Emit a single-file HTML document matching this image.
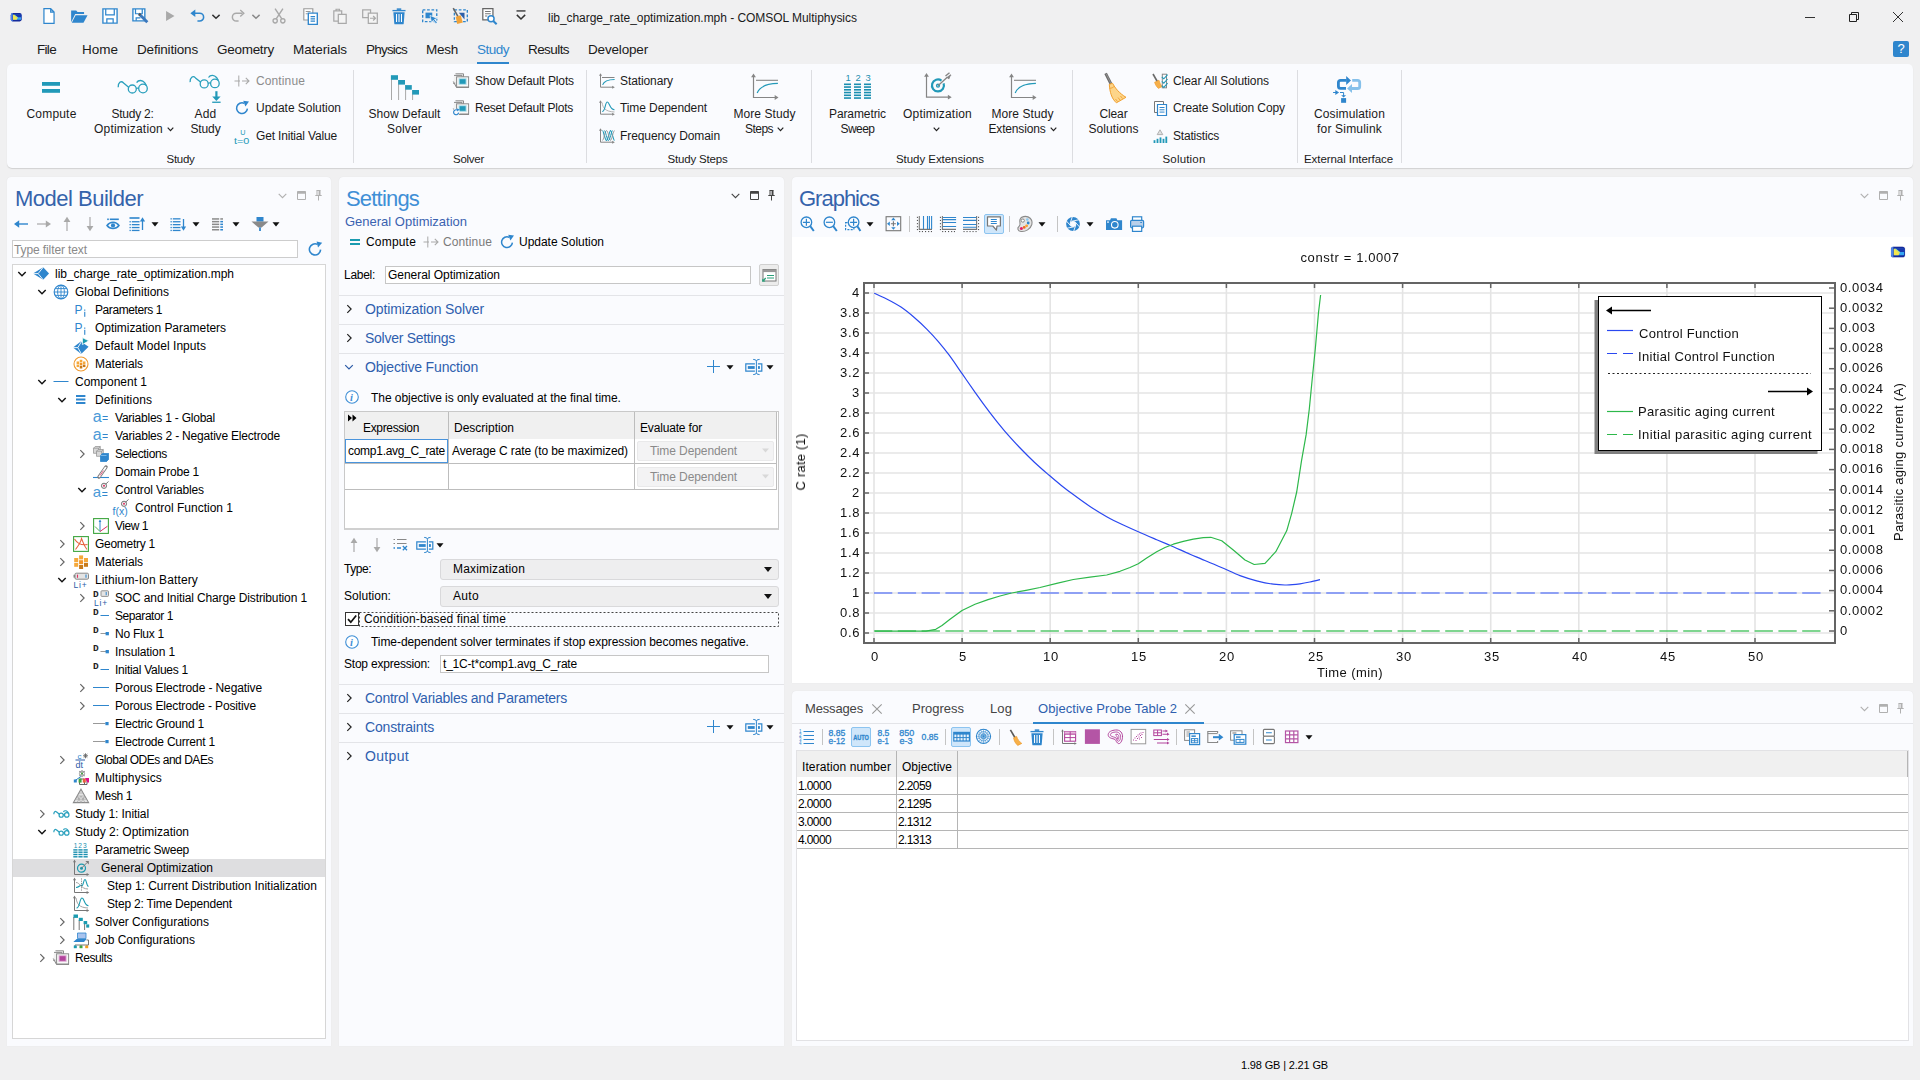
<!DOCTYPE html>
<html><head><meta charset="utf-8"><title>COMSOL Multiphysics</title>
<style>
html,body{margin:0;padding:0;}
body{width:1920px;height:1080px;overflow:hidden;background:#f0f0f1;position:relative;font-family:"Liberation Sans",sans-serif;}
.t{position:absolute;white-space:nowrap;font-family:"Liberation Sans",sans-serif;}
.r{position:absolute;box-sizing:border-box;}
.p{position:absolute;box-sizing:border-box;background:#fafbfe;border-radius:4px 4px 0 0;box-shadow:0 0 1px rgba(0,0,0,0.10);}
svg{overflow:visible;}
</style></head><body>

<svg class="r" style="left:9.8px;top:11px;" width="12.5" height="12.5" viewBox="0 0 16 16"><rect x="0.2" y="1.9" width="15.6" height="12.2" fill="#ececf0" rx="3.5" opacity="0.8"/><rect x="1" y="2.7" width="14" height="10.6" fill="#142a9c" rx="2.6" /><path d="M3.4 2.7H2.8Q1 3 1 5.3V10.7Q1 13 2.8 13.3H3.4Z" fill="#4f86e8" /><rect x="3.8" y="4.7" width="10.4" height="6.6" fill="#35a6f2" rx="0.8" /><path d="M3.8 4.7H5.5L10 8.2L8.6 11.3H3.8Z" fill="#f6e64c" /><path d="M6.2 4.7H14.2V8H10.2Z" fill="#1a37ad" /><path d="M5.5 4.7L10 8.2L9.4 9.6L4.6 5Z" fill="#a8e08a" opacity="0.7"/></svg>
<svg class="r" style="left:40px;top:7.4px;" width="18" height="18" viewBox="0 0 16 16"><path d="M3.5 1.5H9.5L12.5 4.5V14.5H3.5Z M9.5 1.5V4.5H12.5" stroke="#2f86cd" stroke-width="1.1" fill="#fff" /></svg>
<svg class="r" style="left:70px;top:7.4px;" width="18" height="18" viewBox="0 0 16 16"><path d="M1 3h4.5l1.2 1.5H12.5V6.3H4.6L1 13.5Z" fill="#2f86cd" /><path d="M5 7.3H15.6L12 14H1.6Z" fill="#2f86cd" /></svg>
<svg class="r" style="left:101px;top:7.4px;" width="18" height="18" viewBox="0 0 16 16"><path d="M1.7 1.7H14.3V14.3H1.7Z" stroke="#2f86cd" stroke-width="1.2" fill="#fff" /><path d="M4.2 1.8V7H11.8V1.8" stroke="#2f86cd" stroke-width="1.1" fill="none" /><path d="M5.2 14.2V10.6H10.8V14.2" stroke="#2f86cd" stroke-width="1.1" fill="none" /></svg>
<svg class="r" style="left:131px;top:7.4px;" width="18" height="18" viewBox="0 0 16 16"><path d="M1.7 1.7H12.3V12.3H1.7Z" stroke="#2f86cd" stroke-width="1.2" fill="#fff" /><path d="M4 1.8V6H10V1.8" stroke="#2f86cd" stroke-width="1.1" fill="none" /><path d="M4.6 12.2V9.6H8.4" stroke="#2f86cd" stroke-width="1.1" fill="none" /><path d="M7.5 6.5L14.5 13.5" stroke="#3a78bd" stroke-width="2.6" fill="none" /><path d="M7 6L8.3 7.3" stroke="#555555" stroke-width="2.2" fill="none" /></svg>
<svg class="r" style="left:161px;top:7.4px;" width="18" height="18" viewBox="0 0 16 16"><path d="M4.5 3.5L12 8L4.5 12.5Z" fill="#a9a9a9" /></svg>
<svg class="r" style="left:189px;top:7.4px;" width="18" height="18" viewBox="0 0 16 16"><path d="M4 5.5H9.5A3.5 3.5 0 0 1 9.5 12.5H7.5" stroke="#2f86cd" stroke-width="1.4" fill="none" /><path d="M1.2 5.5L5.6 2.2V8.8Z" fill="#2f86cd" /></svg>
<svg class="r" style="left:207px;top:7.4px;" width="18" height="18" viewBox="0 0 16 16"><path d="M4.8 7L8 10L11.2 7" stroke="#333" stroke-width="1.3" fill="none" /></svg>
<svg class="r" style="left:229px;top:7.4px;" width="18" height="18" viewBox="0 0 16 16"><path d="M12 5.5H6.5A3.5 3.5 0 0 0 6.5 12.5H8.5" stroke="#a9a9a9" stroke-width="1.3" fill="none" /><path d="M10 2.6L13.2 5.5L10 8.4" stroke="#a9a9a9" stroke-width="1.2" fill="none" /></svg>
<svg class="r" style="left:247px;top:7.4px;" width="18" height="18" viewBox="0 0 16 16"><path d="M4.8 7L8 10L11.2 7" stroke="#8a8a8a" stroke-width="1.3" fill="none" /></svg>
<svg class="r" style="left:270px;top:7.4px;" width="18" height="18" viewBox="0 0 16 16"><path d="M4.5 1.5L10.5 10.5M11.5 1.5L5.5 10.5" stroke="#a9a9a9" stroke-width="1.3" fill="none" /><circle cx="4.6" cy="12.3" r="1.9" fill="none" stroke="#a9a9a9" stroke-width="1.2"/><circle cx="11.4" cy="12.3" r="1.9" fill="none" stroke="#a9a9a9" stroke-width="1.2"/></svg>
<svg class="r" style="left:301px;top:7.4px;" width="18" height="18" viewBox="0 0 16 16"><path d="M2.5 1.5H10.5V11.5H2.5Z" stroke="#999" stroke-width="1" fill="#fff" /><path d="M4.2 4H8.5M4.2 6H6" stroke="#999" stroke-width="0.9" fill="none" /><path d="M6.5 5.5H14.5V15.5H6.5Z" stroke="#2f86cd" stroke-width="1.2" fill="#fff" /><path d="M8.5 8.5H12.5M8.5 10.5H12.5M8.5 12.5H12.5" stroke="#2f86cd" stroke-width="1" fill="none" /></svg>
<svg class="r" style="left:331px;top:7.4px;" width="18" height="18" viewBox="0 0 16 16"><path d="M2.5 3.5H9.5V12.5H2.5Z M4.5 3.5V2H7.5V3.5" stroke="#a9a9a9" stroke-width="1.1" fill="none" /><path d="M6.5 6.5H13.5V14.5H6.5Z" stroke="#a9a9a9" stroke-width="1.1" fill="#f4f4f4" /></svg>
<svg class="r" style="left:361px;top:7.4px;" width="18" height="18" viewBox="0 0 16 16"><path d="M1.5 2.5H8.5V9.5H1.5Z" stroke="#a9a9a9" stroke-width="1.1" fill="none" /><path d="M6.5 5.5H14.5V14.5H6.5Z" stroke="#a9a9a9" stroke-width="1.1" fill="#f4f4f4" /><path d="M8 10H12.5M10.8 8L12.8 10L10.8 12" stroke="#a9a9a9" stroke-width="1.1" fill="none" /></svg>
<svg class="r" style="left:390px;top:7.4px;" width="18" height="18" viewBox="0 0 16 16"><path d="M3 4.6H13L12.2 14.6Q12.1 15.4 11.3 15.4H4.7Q3.9 15.4 3.8 14.6Z" fill="#2f86cd" /><path d="M2.2 2.6H13.8V3.8H2.2Z" fill="#2f86cd" /><path d="M6 1.2H10V2.6H6Z" fill="#2f86cd" /><path d="M5.8 6.2V13.4M8 6.2V13.4M10.2 6.2V13.4" stroke="#fff" stroke-width="0.9" fill="none" /></svg>
<svg class="r" style="left:421px;top:7.4px;" width="18" height="18" viewBox="0 0 16 16"><rect x="1.5" y="2.5" width="12.5" height="10.5" fill="none" stroke="#2f86cd" stroke-width="1.2" stroke-dasharray="2.4 1.5"/><rect x="4" y="5" width="6" height="5" fill="#2f86cd" /><path d="M8 7.5L14.8 10.2L12 11L14.5 14L13.3 14.9L10.9 11.9L9.3 13.9Z" fill="#2f86cd" stroke="#fff" stroke-width="0.6"/></svg>
<svg class="r" style="left:451px;top:7.4px;" width="18" height="18" viewBox="0 0 16 16"><rect x="3" y="2.5" width="11.5" height="10.5" fill="none" stroke="#2f86cd" stroke-width="1.2" stroke-dasharray="2.4 1.5"/><path d="M7 5H12V11Z" fill="#2c5fa8" /><path d="M2 1L6.5 9" stroke="#666" stroke-width="1.4" fill="none" /><path d="M4.2 8.6L8.6 7.4L10.5 13.8L5.5 15Z" fill="#f0a238" /></svg>
<svg class="r" style="left:480px;top:7.4px;" width="18" height="18" viewBox="0 0 16 16"><path d="M2.5 1.5H11.5V11.5H2.5Z" stroke="#666" stroke-width="1.1" fill="#fff" /><path d="M4.5 4H9.5M4.5 6H9.5M4.5 8H6.5" stroke="#777" stroke-width="0.9" fill="none" /><circle cx="9.8" cy="10.4" r="2.7" fill="#fff" stroke="#2f86cd" stroke-width="1.3"/><path d="M11.8 12.4L14.8 15.4" stroke="#2f86cd" stroke-width="1.8" fill="none" /></svg>
<svg class="r" style="left:512px;top:7.4px;" width="18" height="18" viewBox="0 0 16 16"><path d="M4 3.5H12" stroke="#333" stroke-width="1.2" fill="none" /><path d="M4.3 7L8 10.7L11.7 7" stroke="#333" stroke-width="1.3" fill="none" /></svg>
<div class="t" style="left:548px;top:10.0px;font-size:12px;line-height:16px;color:#1a1a1a;letter-spacing:-0.039px;">lib_charge_rate_optimization.mph - COMSOL Multiphysics</div>
<svg class="r" style="left:1804px;top:11px;" width="12" height="12" viewBox="0 0 12 12"><path d="M1 6.5H11" stroke="#333" stroke-width="1" fill="none"/></svg>
<svg class="r" style="left:1848px;top:11px;" width="12" height="12" viewBox="0 0 12 12"><path d="M1.5 3.5H8.5V10.5H1.5Z M3.5 3.5V1.5H10.5V8.5H8.5" stroke="#222" stroke-width="1" fill="none"/></svg>
<svg class="r" style="left:1892px;top:11px;" width="12" height="12" viewBox="0 0 12 12"><path d="M1 1L11 11M11 1L1 11" stroke="#333" stroke-width="1" fill="none"/></svg>
<div class="r" style="left:1893px;top:41px;width:16px;height:16px;background:#2f86cd;border-radius:2px;"></div>
<div class="t" style="left:1901px;top:41.0px;font-size:13px;line-height:16px;color:#fff;transform:translateX(-50%);">?</div>
<div class="t" style="left:37px;top:42.0px;font-size:13.5px;line-height:16px;color:#1a1a1a;letter-spacing:-0.688px;">File</div>
<div class="t" style="left:82px;top:42.0px;font-size:13.5px;line-height:16px;color:#1a1a1a;letter-spacing:-0.003px;">Home</div>
<div class="t" style="left:137px;top:42.0px;font-size:13.5px;line-height:16px;color:#1a1a1a;letter-spacing:-0.185px;">Definitions</div>
<div class="t" style="left:217px;top:42.0px;font-size:13.5px;line-height:16px;color:#1a1a1a;letter-spacing:-0.283px;">Geometry</div>
<div class="t" style="left:293px;top:42.0px;font-size:13.5px;line-height:16px;color:#1a1a1a;letter-spacing:-0.085px;">Materials</div>
<div class="t" style="left:366px;top:42.0px;font-size:13.5px;line-height:16px;color:#1a1a1a;letter-spacing:-0.787px;">Physics</div>
<div class="t" style="left:426px;top:42.0px;font-size:13.5px;line-height:16px;color:#1a1a1a;letter-spacing:-0.253px;">Mesh</div>
<div class="t" style="left:477px;top:42.0px;font-size:13.5px;line-height:16px;color:#2f86cd;letter-spacing:-0.504px;">Study</div>
<div class="t" style="left:528px;top:42.0px;font-size:13.5px;line-height:16px;color:#1a1a1a;letter-spacing:-0.574px;">Results</div>
<div class="t" style="left:588px;top:42.0px;font-size:13.5px;line-height:16px;color:#1a1a1a;letter-spacing:-0.171px;">Developer</div>
<div class="r" style="left:477px;top:62px;width:32px;height:2px;background:#2f86cd;"></div>
<div class="p" style="left:7px;top:64px;width:1906px;height:104px;border-radius:5px;box-shadow:0 1px 1px rgba(0,0,0,0.13);"></div>
<div class="r" style="left:353px;top:70px;width:1px;height:93px;background:#dcdde1;"></div>
<div class="r" style="left:586px;top:70px;width:1px;height:93px;background:#dcdde1;"></div>
<div class="r" style="left:811px;top:70px;width:1px;height:93px;background:#dcdde1;"></div>
<div class="r" style="left:1072px;top:70px;width:1px;height:93px;background:#dcdde1;"></div>
<div class="r" style="left:1297px;top:70px;width:1px;height:93px;background:#dcdde1;"></div>
<div class="r" style="left:1401px;top:70px;width:1px;height:93px;background:#dcdde1;"></div>
<svg class="r" style="left:35px;top:71px;" width="32" height="32" viewBox="0 0 32 32"><rect x="7" y="11" width="18" height="3.8" fill="#2299b8" /><rect x="7" y="18" width="18" height="3.8" fill="#2299b8" /></svg>
<div class="t" style="left:26.5px;top:106.0px;font-size:12px;line-height:16px;color:#1a1a1a;letter-spacing:0.185px;">Compute</div>
<svg class="r" style="left:116px;top:71px;" width="32" height="32" viewBox="0 0 32 32"><g transform="translate(0,0)"><path d="M2.2 16.2C2 11.5 5 9.3 7.6 12L12.9 16.4" stroke="#2aa0bd" stroke-width="1.3" fill="none" /><circle cx="16.3" cy="18" r="4" fill="none" stroke="#2aa0bd" stroke-width="1.3"/><circle cx="27" cy="17.5" r="4.3" fill="none" stroke="#2aa0bd" stroke-width="1.3"/><path d="M20.2 17.6Q21.5 16.6 22.8 17.4" stroke="#2aa0bd" stroke-width="1.3" fill="none" /><path d="M20.6 11.6C22.5 8.6 26.5 9 28.6 11.6L30.6 14.8" stroke="#2aa0bd" stroke-width="1.3" fill="none" /></g></svg>
<div class="t" style="left:111.5px;top:106.0px;font-size:12px;line-height:16px;color:#1a1a1a;letter-spacing:-0.255px;">Study 2:</div>
<div class="t" style="left:94.0px;top:121.0px;font-size:12px;line-height:16px;color:#1a1a1a;letter-spacing:0.191px;">Optimization</div>
<svg class="r" style="left:167.0px;top:127px;" width="7" height="5" viewBox="0 0 7 5"><path d="M0.7 0.7L3.5 3.6L6.3 0.7" stroke="#222" stroke-width="1.2" fill="none"/></svg>
<svg class="r" style="left:189px;top:71px;" width="32" height="32" viewBox="0 0 32 32"><g transform="translate(-1.1,-5.1)"><path d="M2.2 16.2C2 11.5 5 9.3 7.6 12L12.9 16.4" stroke="#2aa0bd" stroke-width="1.3" fill="none" /><circle cx="16.3" cy="18" r="4" fill="none" stroke="#2aa0bd" stroke-width="1.3"/><circle cx="27" cy="17.5" r="4.3" fill="none" stroke="#2aa0bd" stroke-width="1.3"/><path d="M20.2 17.6Q21.5 16.6 22.8 17.4" stroke="#2aa0bd" stroke-width="1.3" fill="none" /><path d="M20.6 11.6C22.5 8.6 26.5 9 28.6 11.6L30.6 14.8" stroke="#2aa0bd" stroke-width="1.3" fill="none" /></g><path d="M27.4 20.2V27" stroke="#2299b8" stroke-width="2.2" fill="none" /><path d="M23.2 25.6H31.6L27.4 30Z" fill="#2299b8" /><rect x="23.2" y="30.6" width="8.4" height="1.3" fill="#2299b8" /></svg>
<div class="t" style="left:194.5px;top:106.0px;font-size:12px;line-height:16px;color:#1a1a1a;letter-spacing:0.215px;">Add</div>
<div class="t" style="left:190.5px;top:121.0px;font-size:12px;line-height:16px;color:#1a1a1a;letter-spacing:-0.138px;">Study</div>
<svg class="r" style="left:388px;top:71px;" width="32" height="32" viewBox="0 0 32 32"><path d="M3.5 5V29M10.6 9V29M17.6 14V29M24.6 19V29" stroke="#a8a8a8" stroke-width="1" fill="none" /><rect x="2.9" y="4.2" width="7.1" height="4.6" fill="#2299b8" /><rect x="10.2" y="9" width="6.8" height="4.6" fill="#2299b8" /><rect x="17.2" y="14.1" width="6.6" height="4.6" fill="#2299b8" /><rect x="24.2" y="19" width="6.8" height="4.6" fill="#2299b8" /></svg>
<div class="t" style="left:368.5px;top:106.0px;font-size:12px;line-height:16px;color:#1a1a1a;letter-spacing:0.050px;">Show Default</div>
<div class="t" style="left:387.0px;top:121.0px;font-size:12px;line-height:16px;color:#1a1a1a;letter-spacing:0.163px;">Solver</div>
<svg class="r" style="left:748px;top:71px;" width="32" height="32" viewBox="0 0 32 32"><path d="M5.5 4.4V26.5H28.5" stroke="#858585" stroke-width="1.2" fill="none" /><path d="M5.5 2.4L3.1 6.199999999999999H7.9Z" fill="#858585" /><path d="M30.5 26.5L26.7 24.1V28.9Z" fill="#858585" /><path d="M8 9.3H30" stroke="#858585" stroke-width="1.1" fill="none" /><path d="M9.2 21.9C12 15 19 12.6 29.9 12.4" stroke="#2299b8" stroke-width="1.2" fill="none" /></svg>
<div class="t" style="left:733.5px;top:106.0px;font-size:12px;line-height:16px;color:#1a1a1a;letter-spacing:0.063px;">More Study</div>
<div class="t" style="left:745.0px;top:121.0px;font-size:12px;line-height:16px;color:#1a1a1a;letter-spacing:-0.538px;">Steps</div>
<svg class="r" style="left:777.0px;top:127px;" width="7" height="5" viewBox="0 0 7 5"><path d="M0.7 0.7L3.5 3.6L6.3 0.7" stroke="#222" stroke-width="1.2" fill="none"/></svg>
<svg class="r" style="left:841px;top:71px;" width="32" height="32" viewBox="0 0 32 32"><text x="4.4" y="9.8" font-family="Liberation Sans" font-size="9.4" fill="#1a8fb0" letter-spacing="4.9">123</text><rect x="3" y="12.5" width="7" height="1.6" fill="#1a8fb0" /><rect x="3" y="15.25" width="7" height="1.6" fill="#1a8fb0" /><rect x="3" y="18.0" width="7" height="1.6" fill="#1a8fb0" /><rect x="3" y="20.75" width="7" height="1.6" fill="#1a8fb0" /><rect x="3" y="23.5" width="7" height="1.6" fill="#1a8fb0" /><rect x="3" y="26.25" width="7" height="1.6" fill="#1a8fb0" /><rect x="13" y="12.5" width="7" height="1.6" fill="#1a8fb0" /><rect x="13" y="15.25" width="7" height="1.6" fill="#1a8fb0" /><rect x="13" y="18.0" width="7" height="1.6" fill="#1a8fb0" /><rect x="13" y="20.75" width="7" height="1.6" fill="#1a8fb0" /><rect x="13" y="23.5" width="7" height="1.6" fill="#1a8fb0" /><rect x="13" y="26.25" width="7" height="1.6" fill="#1a8fb0" /><rect x="23" y="12.5" width="7" height="1.6" fill="#1a8fb0" /><rect x="23" y="15.25" width="7" height="1.6" fill="#1a8fb0" /><rect x="23" y="18.0" width="7" height="1.6" fill="#1a8fb0" /><rect x="23" y="20.75" width="7" height="1.6" fill="#1a8fb0" /><rect x="23" y="23.5" width="7" height="1.6" fill="#1a8fb0" /><rect x="23" y="26.25" width="7" height="1.6" fill="#1a8fb0" /></svg>
<div class="t" style="left:829.0px;top:106.0px;font-size:12px;line-height:16px;color:#1a1a1a;letter-spacing:-0.102px;">Parametric</div>
<div class="t" style="left:840.5px;top:121.0px;font-size:12px;line-height:16px;color:#1a1a1a;letter-spacing:-0.540px;">Sweep</div>
<svg class="r" style="left:921px;top:71px;" width="32" height="32" viewBox="0 0 32 32"><path d="M5.5 3.9V26.2H28.7" stroke="#858585" stroke-width="1.2" fill="none" /><path d="M5.5 1.9L3.1 5.699999999999999H7.9Z" fill="#858585" /><path d="M30.7 26.2L26.9 23.8V28.599999999999998Z" fill="#858585" /><path d="M20.5 9.6A6 6 0 1 0 22.6 12.4" stroke="#2299b8" stroke-width="2.2" fill="none" /><circle cx="17" cy="14.7" r="2.1" fill="#2299b8"/><circle cx="17" cy="14.7" r="0.7" fill="#fff"/><path d="M17 14.7L26.5 6" stroke="#858585" stroke-width="1.3" fill="none" /><path d="M24.5 5L28.5 1.8M26 7L30 3.8M27.5 8L29 4.5" stroke="#858585" stroke-width="1.4" fill="none" /></svg>
<div class="t" style="left:903.0px;top:106.0px;font-size:12px;line-height:16px;color:#1a1a1a;letter-spacing:0.191px;">Optimization</div>
<svg class="r" style="left:1006px;top:71px;" width="32" height="32" viewBox="0 0 32 32"><path d="M5.5 4.4V26.5H28.5" stroke="#858585" stroke-width="1.2" fill="none" /><path d="M5.5 2.4L3.1 6.199999999999999H7.9Z" fill="#858585" /><path d="M30.5 26.5L26.7 24.1V28.9Z" fill="#858585" /><path d="M8 9.3H30" stroke="#858585" stroke-width="1.1" fill="none" /><path d="M9.2 21.9C12 15 19 12.6 29.9 12.4" stroke="#2299b8" stroke-width="1.2" fill="none" /></svg>
<div class="t" style="left:991.5px;top:106.0px;font-size:12px;line-height:16px;color:#1a1a1a;letter-spacing:0.063px;">More Study</div>
<div class="t" style="left:988.5px;top:121.0px;font-size:12px;line-height:16px;color:#1a1a1a;letter-spacing:-0.171px;">Extensions</div>
<svg class="r" style="left:1049.5px;top:127px;" width="7" height="5" viewBox="0 0 7 5"><path d="M0.7 0.7L3.5 3.6L6.3 0.7" stroke="#222" stroke-width="1.2" fill="none"/></svg>
<svg class="r" style="left:1097px;top:71px;" width="32" height="32" viewBox="0 0 32 32"><path d="M8.6 2.4L14 13" stroke="#6a6a6a" stroke-width="2.8" fill="none" /><path d="M9 2.6L13.6 12" stroke="#9a9a9a" stroke-width="0.8" fill="none" /><path d="M12.3 13.3L15.6 12.3C18 17 22.5 22.5 29 26.3L19.4 31.8C14.5 27.5 12.8 21 12.3 13.3Z" fill="#fdd58a" stroke="#f0a030" stroke-width="1" stroke-linejoin="round"/><path d="M12.6 17.2C14.5 17.4 16 16.6 17.2 15.2M18.5 28L20.5 30.5M21 26.5L23 29M23.5 25L25.5 27.5" stroke="#f0a030" stroke-width="0.9" fill="none" /></svg>
<div class="t" style="left:1099.5px;top:106.0px;font-size:12px;line-height:16px;color:#1a1a1a;letter-spacing:-0.137px;">Clear</div>
<div class="t" style="left:1088.5px;top:121.0px;font-size:12px;line-height:16px;color:#1a1a1a;letter-spacing:0.069px;">Solutions</div>
<svg class="r" style="left:1332px;top:71px;" width="32" height="32" viewBox="0 0 32 32"><path d="M14 17.3H8.6Q6.4 17.3 6.4 15.2V11.5Q6.4 9.4 8.6 9.4H14.6" stroke="#2f86cd" stroke-width="2.8" fill="none" /><path d="M14.2 4.9L19 9.4L14.2 14.1Z" fill="#2f86cd" /><path d="M20.2 9.4H25.5Q27.7 9.4 27.7 11.5V15.4Q27.7 17.5 25.5 17.5H19.6" stroke="#85c0ea" stroke-width="2.8" fill="none" /><path d="M20 13.1L15.1 17.6L20 21.9Z" fill="#85c0ea" /><path d="M1.1 21.5H4M8 21.5H11.6V25" stroke="#2f86cd" stroke-width="1" fill="none" /><path d="M3.3 19.1L7.1 21.5L3.3 24Z" fill="#2f86cd" /><path d="M9.1 24.2H14.1L11.6 26.6Z" fill="#2f86cd" /><rect x="9.1" y="27.1" width="5" height="4.7" fill="#2f86cd" /></svg>
<div class="t" style="left:1314.0px;top:106.0px;font-size:12px;line-height:16px;color:#1a1a1a;letter-spacing:0.135px;">Cosimulation</div>
<div class="t" style="left:1317.0px;top:121.0px;font-size:12px;line-height:16px;color:#1a1a1a;letter-spacing:0.192px;">for Simulink</div>
<svg class="r" style="left:933px;top:127px;" width="7" height="5" viewBox="0 0 7 5"><path d="M0.7 0.7L3.5 3.6L6.3 0.7" stroke="#222" stroke-width="1.2" fill="none"/></svg>
<svg class="r" style="left:234px;top:73px;" width="16" height="16" viewBox="0 0 16 16"><path d="M0.5 8H6M4.8 2.5V13.5" stroke="#a9a9a9" stroke-width="1" fill="none" /><path d="M8 8H15M11.8 4.8L15 8L11.8 11.2" stroke="#a9a9a9" stroke-width="1.1" fill="none" /></svg>
<div class="t" style="left:256px;top:73.0px;font-size:12px;line-height:16px;color:#8c8c8c;letter-spacing:0.119px;">Continue</div>
<svg class="r" style="left:234px;top:100px;" width="16" height="16" viewBox="0 0 16 16"><path d="M13.4 8.6A5.4 5.4 0 1 1 10.2 3.2" stroke="#2f86cd" stroke-width="1.5" fill="none" /><path d="M9.2 0.8L15 1.4L11.4 6.4Z" fill="#2f86cd" /></svg>
<div class="t" style="left:256px;top:100.0px;font-size:12px;line-height:16px;color:#1a1a1a;letter-spacing:-0.028px;">Update Solution</div>
<svg class="r" style="left:234px;top:128px;" width="16" height="16" viewBox="0 0 16 16"><text x="6.2" y="6.6" font-family="Liberation Sans" font-size="7.2" fill="#2299b8">U</text><text x="0" y="15.6" font-family="Liberation Sans" font-size="9.6" fill="#2299b8" textLength="15.4" lengthAdjust="spacingAndGlyphs">t=0</text></svg>
<div class="t" style="left:256px;top:128.0px;font-size:12px;line-height:16px;color:#1a1a1a;letter-spacing:-0.168px;">Get Initial Value</div>
<svg class="r" style="left:453px;top:73px;" width="16" height="16" viewBox="0 0 16 16"><path d="M2.5 0.8H10.5V8" stroke="#8a8a8a" stroke-width="1" fill="#f2f2f2" /><path d="M1 2.4H9V10.5H0.3" stroke="#8a8a8a" stroke-width="1" fill="#f2f2f2" /><path d="M0.3 8.5L3.5 14.5H16" stroke="#8a8a8a" stroke-width="1" fill="#ddd" /><rect x="3.6" y="3.8" width="12" height="10.2" fill="#f8f8f8" stroke="#8a8a8a" stroke-width="1" /><rect x="5.6" y="5.2" width="8" height="6.6" fill="#a8dbe8" /><rect x="6.6" y="6.2" width="6" height="4.6" fill="#2299b8" /></svg>
<div class="t" style="left:475px;top:73.0px;font-size:12px;line-height:16px;color:#1a1a1a;letter-spacing:-0.134px;">Show Default Plots</div>
<svg class="r" style="left:453px;top:100px;" width="16" height="16" viewBox="0 0 16 16"><path d="M2.5 0.8H10.5V8" stroke="#8a8a8a" stroke-width="1" fill="#f2f2f2" /><path d="M1 2.4H9V10.5H0.3" stroke="#8a8a8a" stroke-width="1" fill="#f2f2f2" /><path d="M0.3 8.5L3.5 14.5H16" stroke="#8a8a8a" stroke-width="1" fill="#ddd" /><rect x="3.6" y="3.8" width="12" height="10.2" fill="#f8f8f8" stroke="#8a8a8a" stroke-width="1" /><rect x="5.6" y="5.2" width="8" height="6.6" fill="#a8dbe8" /><rect x="6.6" y="6.2" width="6" height="4.6" fill="#2299b8" /><circle cx="3.2" cy="12.2" r="3.4" fill="#fafbfe"/><path d="M5.6 12.6A2.5 2.5 0 1 1 4.2 10" stroke="#2f86cd" stroke-width="1.2" fill="none" /><path d="M3.4 8.2L6.6 9.4L4.4 11.6Z" fill="#2f86cd" /></svg>
<div class="t" style="left:475px;top:100.0px;font-size:12px;line-height:16px;color:#1a1a1a;letter-spacing:-0.250px;">Reset Default Plots</div>
<svg class="r" style="left:599px;top:73px;" width="16" height="16" viewBox="0 0 16 16"><path d="M1.5 2V14.2H14" stroke="#858585" stroke-width="1" fill="none" /><path d="M1.5 0.2L0 2.8H3Z" fill="#858585" /><path d="M15.8 14.2L13.2 12.7V15.7Z" fill="#858585" /><path d="M3 4.5H15.5" stroke="#858585" stroke-width="1" fill="none" /><path d="M3.6 11.9C5 8 9 6.6 15.6 6.5" stroke="#2299b8" stroke-width="1.1" fill="none" /></svg>
<div class="t" style="left:620px;top:73.0px;font-size:12px;line-height:16px;color:#1a1a1a;letter-spacing:-0.104px;">Stationary</div>
<svg class="r" style="left:599px;top:100px;" width="16" height="16" viewBox="0 0 16 16"><path d="M1.5 2V14.2H14" stroke="#858585" stroke-width="1" fill="none" /><path d="M1.5 0.2L0 2.8H3Z" fill="#858585" /><path d="M15.8 14.2L13.2 12.7V15.7Z" fill="#858585" /><path d="M3 2.5C4 8 6 11.5 15.5 12" stroke="#aaa" stroke-width="0.9" fill="none" /><path d="M3.2 11.5C6.5 11.5 6 2 8.3 2S10.5 9.5 15.5 9.8" stroke="#2299b8" stroke-width="1.1" fill="none" /></svg>
<div class="t" style="left:620px;top:100.0px;font-size:12px;line-height:16px;color:#1a1a1a;letter-spacing:-0.093px;">Time Dependent</div>
<svg class="r" style="left:599px;top:128px;" width="16" height="16" viewBox="0 0 16 16"><path d="M1.5 2V14.2H14" stroke="#858585" stroke-width="1" fill="none" /><path d="M1.5 0.2L0 2.8H3Z" fill="#858585" /><path d="M15.8 14.2L13.2 12.7V15.7Z" fill="#858585" /><path d="M3.5 2.5C4.5 2.5 6 12.5 7.5 12.5S10.5 2.5 11.5 2.5S14.5 12.5 15.5 12.5" stroke="#2299b8" stroke-width="1.1" fill="none" /><path d="M3.5 12.5C4.5 12.5 6 2.5 7.5 2.5S10.5 12.5 11.5 12.5S14.5 2.5 15.5 2.5" stroke="#999" stroke-width="0.9" fill="none" /><path d="M5.5 2.5C6.5 2.5 8 12.5 9.5 12.5S12.5 2.5 13.5 2.5" stroke="#2299b8" stroke-width="1" fill="none" /></svg>
<div class="t" style="left:620px;top:128.0px;font-size:12px;line-height:16px;color:#1a1a1a;letter-spacing:-0.088px;">Frequency Domain</div>
<svg class="r" style="left:1152px;top:73px;" width="16" height="16" viewBox="0 0 16 16"><path d="M1 1L5.6 9" stroke="#6a6a6a" stroke-width="1.6" fill="none" /><path d="M2.6 9.2L7 7.2C7.8 10 8.8 12 10.4 13.4L6.4 15.4C4.4 13.6 3.2 11.6 2.6 9.2Z" fill="#f7b04a" stroke="#ee9a28" stroke-width="0.6"/><rect x="10.3" y="1.2" width="4.2" height="13.6" fill="none" stroke="#888" stroke-width="1" /><path d="M9.8 4L11.8 5.8L15.6 1.6M9.8 8.4L11.8 10.2L15.6 6M9.8 12.6L11.8 14.4L15.6 10.2" stroke="#2299b8" stroke-width="1.1" fill="none" /></svg>
<div class="t" style="left:1173px;top:73.0px;font-size:12px;line-height:16px;color:#1a1a1a;letter-spacing:-0.074px;">Clear All Solutions</div>
<svg class="r" style="left:1152px;top:100px;" width="16" height="16" viewBox="0 0 16 16"><path d="M2.5 1.5H11.5V12.5H2.5Z" stroke="#777" stroke-width="1" fill="#fff" /><path d="M5.5 4.5H14.5V15.5H5.5Z" stroke="#2f86cd" stroke-width="1.2" fill="#fff" /><path d="M7.5 7.5H12.5M7.5 9.8H12.5M7.5 12.1H12.5" stroke="#2f86cd" stroke-width="1" fill="none" /></svg>
<div class="t" style="left:1173px;top:100.0px;font-size:12px;line-height:16px;color:#1a1a1a;letter-spacing:-0.105px;">Create Solution Copy</div>
<svg class="r" style="left:1152px;top:128px;" width="16" height="16" viewBox="0 0 16 16"><path d="M8 1.8L10.8 6.6H5.2Z" fill="#e0e0e0" stroke="#aaa" stroke-width="0.9"/><rect x="1.6" y="12.2" width="1.8" height="2.8" fill="#2299b8" /><rect x="4.6" y="10.8" width="1.8" height="4.2" fill="#2299b8" /><rect x="7.6" y="9.4" width="1.8" height="5.6" fill="#2299b8" /><rect x="10.6" y="10.8" width="1.8" height="4.2" fill="#2299b8" /><rect x="13.4" y="8.6" width="1.8" height="6.4" fill="#2299b8" /></svg>
<div class="t" style="left:1173px;top:128.0px;font-size:12px;line-height:16px;color:#1a1a1a;letter-spacing:-0.202px;">Statistics</div>
<div class="t" style="left:166.5px;top:151.0px;font-size:11.5px;line-height:16px;color:#1a1a1a;letter-spacing:-0.281px;">Study</div>
<div class="t" style="left:453.0px;top:151.0px;font-size:11.5px;line-height:16px;color:#1a1a1a;letter-spacing:-0.266px;">Solver</div>
<div class="t" style="left:667.5px;top:151.0px;font-size:11.5px;line-height:16px;color:#1a1a1a;letter-spacing:-0.183px;">Study Steps</div>
<div class="t" style="left:896.0px;top:151.0px;font-size:11.5px;line-height:16px;color:#1a1a1a;letter-spacing:-0.053px;">Study Extensions</div>
<div class="t" style="left:1162.5px;top:151.0px;font-size:11.5px;line-height:16px;color:#1a1a1a;letter-spacing:0.181px;">Solution</div>
<div class="t" style="left:1304.0px;top:151.0px;font-size:11.5px;line-height:16px;color:#1a1a1a;letter-spacing:-0.062px;">External Interface</div>
<div class="t" style="left:1241px;top:1056.7px;font-size:11px;line-height:16px;color:#000;letter-spacing:-0.157px;">1.98 GB | 2.21 GB</div>
<div class="p" style="left:7px;top:177px;width:323.5px;height:869px;"></div>
<div class="t" style="left:15px;top:185.0px;font-size:22px;line-height:28px;color:#3563ab;letter-spacing:-0.501px;">Model Builder</div>
<svg class="r" style="left:278px;top:193.2px;" width="9" height="6" viewBox="0 0 9 6"><path d="M0.7 0.8L4.5 4.6L8.3 0.8" stroke="#b0b0b0" stroke-width="1.1" fill="none"/></svg>
<svg class="r" style="left:297px;top:191px;" width="9" height="9" viewBox="0 0 9 9"><path d="M0.5 0.5H8.5V8.5H0.5Z M0.5 2H8.5" stroke="#b0b0b0" stroke-width="1" fill="none"/><rect x="0.5" y="0.5" width="8" height="2" fill="#b0b0b0"/></svg>
<svg class="r" style="left:315px;top:189.5px;" width="7" height="11" viewBox="0 0 7 11"><path d="M1.5 0.5H5.5M2 0.5V5.5M5 0.5V5.5M0.3 5.5H6.7M3.5 5.5V10.5" stroke="#b0b0b0" stroke-width="1" fill="none"/><rect x="3.6" y="0.5" width="1.4" height="5" fill="#b0b0b0"/></svg>
<svg class="r" style="left:13px;top:216px;" width="16" height="16" viewBox="0 0 16 16"><path d="M4 8H15" stroke="#2f86cd" stroke-width="1.4" fill="none" /><path d="M1 8L6.2 4.2V11.8Z" fill="#2f86cd" /></svg>
<svg class="r" style="left:36px;top:216px;" width="16" height="16" viewBox="0 0 16 16"><path d="M1 8H12" stroke="#a9a9a9" stroke-width="1.2" fill="none" /><path d="M15 8L9.8 4.4V11.6Z" fill="#a9a9a9" /></svg>
<svg class="r" style="left:59px;top:216px;" width="16" height="16" viewBox="0 0 16 16"><path d="M8 15V3" stroke="#a9a9a9" stroke-width="1.2" fill="none" /><path d="M8 0.8L4.6 6H11.4Z" fill="#a9a9a9" /></svg>
<svg class="r" style="left:82px;top:216px;" width="16" height="16" viewBox="0 0 16 16"><path d="M8 1V13" stroke="#a9a9a9" stroke-width="1.2" fill="none" /><path d="M8 15.2L4.6 10H11.4Z" fill="#a9a9a9" /></svg>
<svg class="r" style="left:105px;top:216px;" width="16" height="16" viewBox="0 0 16 16"><rect x="2.2" y="2.5" width="1.6" height="1.6" fill="#2f86cd" /><rect x="4.8" y="2.5" width="9" height="1.6" fill="#2f86cd" /><path d="M2 9.5C5 5 11 5 14 9.5C11 13.5 5 13.5 2 9.5Z" stroke="#2f86cd" stroke-width="1.5" fill="none" /><circle cx="8" cy="9.4" r="2.1" fill="#2f86cd"/></svg>
<svg class="r" style="left:129px;top:216px;" width="16" height="16" viewBox="0 0 16 16"><rect x="0.5" y="1.2" width="10" height="1.6" fill="#2f86cd" /><rect x="0.5" y="2.2" opacity="0" width="1.3" height="1.3" fill="#2f86cd" /><rect x="2.8" y="2.2" opacity="0" width="7.7" height="1.3" fill="#2f86cd" /><rect x="0.5" y="5.1" width="1.3" height="1.3" fill="#2f86cd" /><rect x="2.8" y="5.1" width="7.7" height="1.3" fill="#2f86cd" /><rect x="0.5" y="8.0" width="1.3" height="1.3" fill="#2f86cd" /><rect x="2.8" y="8.0" width="7.7" height="1.3" fill="#2f86cd" /><rect x="0.5" y="10.899999999999999" width="1.3" height="1.3" fill="#2f86cd" /><rect x="2.8" y="10.899999999999999" width="7.7" height="1.3" fill="#2f86cd" /><rect x="0.5" y="13.8" width="1.3" height="1.3" fill="#2f86cd" /><rect x="2.8" y="13.8" width="7.7" height="1.3" fill="#2f86cd" /><path d="M13.5 14V4" stroke="#2f86cd" stroke-width="1.3" fill="none" /><path d="M13.5 1.2L10.9 5.4H16.1Z" fill="#2f86cd" /></svg>
<svg class="r" style="left:147px;top:216px;" width="16" height="16" viewBox="0 0 16 16"><path d="M4.5 6.2H11.5L8 10.4Z" fill="#111" /></svg>
<svg class="r" style="left:170px;top:216px;" width="16" height="16" viewBox="0 0 16 16"><rect x="0.5" y="2.2" width="1.3" height="1.3" fill="#2f86cd" /><rect x="2.8" y="2.2" width="7.7" height="1.3" fill="#2f86cd" /><rect x="0.5" y="5.1" width="1.3" height="1.3" fill="#2f86cd" /><rect x="2.8" y="5.1" width="7.7" height="1.3" fill="#2f86cd" /><rect x="0.5" y="8.0" width="1.3" height="1.3" fill="#2f86cd" /><rect x="2.8" y="8.0" width="7.7" height="1.3" fill="#2f86cd" /><rect x="0.5" y="10.899999999999999" width="1.3" height="1.3" fill="#2f86cd" /><rect x="2.8" y="10.899999999999999" width="7.7" height="1.3" fill="#2f86cd" /><rect x="0.5" y="13.8" width="1.3" height="1.3" fill="#2f86cd" /><rect x="2.8" y="13.8" width="7.7" height="1.3" fill="#2f86cd" /><path d="M13.5 3V11.5" stroke="#2f86cd" stroke-width="1.3" fill="none" /><path d="M13.5 14.8L10.9 10.6H16.1Z" fill="#2f86cd" /></svg>
<svg class="r" style="left:188px;top:216px;" width="16" height="16" viewBox="0 0 16 16"><path d="M4.5 6.2H11.5L8 10.4Z" fill="#111" /></svg>
<svg class="r" style="left:210px;top:216px;" width="16" height="16" viewBox="0 0 16 16"><rect x="2" y="2.2" width="7.2" height="1.5" fill="#8a8a8a" /><rect x="10.3" y="2.2" width="2.7" height="1.5" fill="#8a8a8a" /><rect x="2" y="4.9" width="7.2" height="1.5" fill="#8a8a8a" /><rect x="10.3" y="4.9" width="2.7" height="1.5" fill="#2f86cd" /><rect x="2" y="7.6000000000000005" width="7.2" height="1.5" fill="#8a8a8a" /><rect x="10.3" y="7.6000000000000005" width="2.7" height="1.5" fill="#2f86cd" /><rect x="2" y="10.3" width="7.2" height="1.5" fill="#8a8a8a" /><rect x="10.3" y="10.3" width="2.7" height="1.5" fill="#2f86cd" /><rect x="2" y="13.0" width="7.2" height="1.5" fill="#8a8a8a" /><rect x="10.3" y="13.0" width="2.7" height="1.5" fill="#2f86cd" /></svg>
<svg class="r" style="left:228px;top:216px;" width="16" height="16" viewBox="0 0 16 16"><path d="M4.5 6.2H11.5L8 10.4Z" fill="#111" /></svg>
<svg class="r" style="left:252px;top:216px;" width="16" height="16" viewBox="0 0 16 16"><rect x="4.5" y="1" width="7" height="4.6" fill="#2f86cd" /><path d="M-0.5 5.6H16.5L9.6 11.4H6.4Z" fill="#8a8a8a" /><rect x="7.1" y="11.4" width="1.8" height="3.6" fill="#2f86cd" /></svg>
<svg class="r" style="left:268px;top:216px;" width="16" height="16" viewBox="0 0 16 16"><path d="M4.5 6.2H11.5L8 10.4Z" fill="#111" /></svg>
<div class="r" style="left:12px;top:240px;width:286px;height:18px;background:#fff;border:1px solid #cdcdcd;"></div>
<div class="t" style="left:14px;top:241.5px;font-size:12px;line-height:16px;color:#8a8a8a;letter-spacing:-0.108px;">Type filter text</div>
<svg class="r" style="left:307px;top:241px;" width="16" height="16" viewBox="0 0 16 16"><path d="M13.6 8.6A5.6 5.6 0 1 1 10.6 3.4" stroke="#2f86cd" stroke-width="1.6" fill="none" /><path d="M9.6 0.6L15.2 1.8L11 6.4Z" fill="#2f86cd" /></svg>
<div class="r" style="left:12px;top:264px;width:314px;height:775px;background:#fff;border:1px solid #d6d6d6;"></div>
<svg class="r" style="left:17px;top:269.0px;" width="10" height="10" viewBox="0 0 10 10"><path d="M1.3 3L5 6.8L8.7 3" stroke="#111" stroke-width="1.4" fill="none"/></svg>
<svg class="r" style="left:33px;top:266.0px;" width="16" height="16" viewBox="0 0 16 16"><path d="M0 7.6L10.2 1.3L16 7.6L10.2 13.8Z" fill="#2f86cd" /><path d="M0 7.6H5.1M5.1 7.6L10.2 1.3M5.1 7.6L10.2 13.8" stroke="#fff" stroke-width="0.9" fill="none" /></svg>
<div class="t" style="left:55px;top:265.5px;font-size:12px;line-height:16px;color:#000;letter-spacing:-0.036px;">lib_charge_rate_optimization.mph</div>
<svg class="r" style="left:37px;top:287.0px;" width="10" height="10" viewBox="0 0 10 10"><path d="M1.3 3L5 6.8L8.7 3" stroke="#111" stroke-width="1.4" fill="none"/></svg>
<svg class="r" style="left:53px;top:284.0px;" width="16" height="16" viewBox="0 0 16 16"><circle cx="8" cy="8" r="6.8" fill="#fff" stroke="#2f86cd" stroke-width="1.2"/><path d="M1.2 8H14.8M2.3 4.6H13.7M2.3 11.4H13.7M8 1.2V14.8" stroke="#2f86cd" stroke-width="0.9" fill="none" /><ellipse cx="8" cy="8" rx="3.4" ry="6.8" fill="none" stroke="#2f86cd" stroke-width="0.9"/></svg>
<div class="t" style="left:75px;top:283.5px;font-size:12px;line-height:16px;color:#000;letter-spacing:-0.005px;">Global Definitions</div>
<svg class="r" style="left:73px;top:302.0px;" width="16" height="16" viewBox="0 0 16 16"><text x="1.5" y="12" font-family="Liberation Sans" font-size="12" fill="#2f86cd">P</text><rect x="11.2" y="7.5" width="1.1" height="1.3" fill="#2f86cd" /><rect x="11.2" y="9.8" width="1.1" height="5" fill="#2f86cd" /></svg>
<div class="t" style="left:95px;top:301.5px;font-size:12px;line-height:16px;color:#000;letter-spacing:-0.420px;">Parameters 1</div>
<svg class="r" style="left:73px;top:320.0px;" width="16" height="16" viewBox="0 0 16 16"><text x="1.5" y="12" font-family="Liberation Sans" font-size="12" fill="#2f86cd">P</text><rect x="11.2" y="7.5" width="1.1" height="1.3" fill="#2f86cd" /><rect x="11.2" y="9.8" width="1.1" height="5" fill="#2f86cd" /></svg>
<div class="t" style="left:95px;top:319.5px;font-size:12px;line-height:16px;color:#000;letter-spacing:-0.047px;">Optimization Parameters</div>
<svg class="r" style="left:73px;top:338.0px;" width="16" height="16" viewBox="0 0 16 16"><path d="M0 9.6L7.8 3.4L15.6 8.8L8.2 16Z" fill="#2f86cd" /><path d="M0 9.6H4.8M4.8 9.6L8.2 4M4.8 9.6L8.4 15.8" stroke="#fff" stroke-width="0.9" fill="none" /><path d="M9.4 -0.4L15.8 2.8L9.4 6.6Z" fill="#1a9bb0" stroke="#fff" stroke-width="0.8"/></svg>
<div class="t" style="left:95px;top:337.5px;font-size:12px;line-height:16px;color:#000;letter-spacing:0.045px;">Default Model Inputs</div>
<svg class="r" style="left:73px;top:356.0px;" width="16" height="16" viewBox="0 0 16 16"><circle cx="8" cy="8" r="7" fill="#fff" stroke="#f09a30" stroke-width="1.1"/><rect x="3.6" y="5.45" width="2.56" height="2.56" fill="#f5a83a" /><rect x="3.6" y="8.52" width="2.56" height="2.56" fill="#f5a83a" /><rect x="6.74" y="3.78" width="2.56" height="2.56" fill="#f5a83a" /><rect x="6.74" y="6.86" width="2.56" height="2.56" fill="#f09428" /><rect x="6.74" y="9.93" width="2.56" height="2.56" fill="#c87a1a" /><rect x="9.87" y="5.45" width="2.56" height="2.56" fill="#f5a83a" /><rect x="9.87" y="8.52" width="2.56" height="2.56" fill="#c87a1a" /></svg>
<div class="t" style="left:95px;top:355.5px;font-size:12px;line-height:16px;color:#000;letter-spacing:-0.077px;">Materials</div>
<svg class="r" style="left:37px;top:377.0px;" width="10" height="10" viewBox="0 0 10 10"><path d="M1.3 3L5 6.8L8.7 3" stroke="#111" stroke-width="1.4" fill="none"/></svg>
<svg class="r" style="left:53px;top:374.0px;" width="16" height="16" viewBox="0 0 16 16"><path d="M0.5 7.5H15.5" stroke="#2f86cd" stroke-width="1" fill="none" /></svg>
<div class="t" style="left:75px;top:373.5px;font-size:12px;line-height:16px;color:#000;letter-spacing:-0.006px;">Component 1</div>
<svg class="r" style="left:57px;top:395.0px;" width="10" height="10" viewBox="0 0 10 10"><path d="M1.3 3L5 6.8L8.7 3" stroke="#111" stroke-width="1.4" fill="none"/></svg>
<svg class="r" style="left:73px;top:392.0px;" width="16" height="16" viewBox="0 0 16 16"><rect x="3" y="3" width="9.4" height="2" fill="#2f86cd" /><rect x="3" y="6.5" width="9.4" height="2" fill="#2f86cd" /><rect x="3" y="10" width="9.4" height="2" fill="#2f86cd" /></svg>
<div class="t" style="left:95px;top:391.5px;font-size:12px;line-height:16px;color:#000;letter-spacing:0.087px;">Definitions</div>
<svg class="r" style="left:93px;top:410.0px;" width="16" height="16" viewBox="0 0 16 16"><text x="-0.3" y="12.4" font-family="Liberation Sans" font-size="16" fill="#4a9ad8">a</text><rect x="9.6" y="6" width="5.2" height="1" fill="#2f86cd" /><rect x="9.6" y="9" width="5.2" height="1" fill="#2f86cd" /></svg>
<div class="t" style="left:115px;top:409.5px;font-size:12px;line-height:16px;color:#000;letter-spacing:-0.226px;">Variables 1 - Global</div>
<svg class="r" style="left:93px;top:428.0px;" width="16" height="16" viewBox="0 0 16 16"><text x="-0.3" y="12.4" font-family="Liberation Sans" font-size="16" fill="#4a9ad8">a</text><rect x="9.6" y="6" width="5.2" height="1" fill="#2f86cd" /><rect x="9.6" y="9" width="5.2" height="1" fill="#2f86cd" /></svg>
<div class="t" style="left:115px;top:427.5px;font-size:12px;line-height:16px;color:#000;letter-spacing:-0.195px;">Variables 2 - Negative Electrode</div>
<svg class="r" style="left:77px;top:449.0px;" width="10" height="10" viewBox="0 0 10 10"><path d="M3.3 1.2L7.1 5L3.3 8.8" stroke="#666" stroke-width="1.2" fill="none"/></svg>
<svg class="r" style="left:93px;top:446.0px;" width="16" height="16" viewBox="0 0 16 16"><g transform="translate(0.5,0.5) scale(0.85)"><path d="M0 2L2 0H8V6L6 8H0Z" fill="#d8d8d8" stroke="#8a8a8a" stroke-width="0.8"/><path d="M0 2H6V8M6 2L8 0" stroke="#8a8a8a" stroke-width="0.8" fill="none" /></g><g transform="translate(3.5,3.5) scale(0.85)"><path d="M0 2L2 0H8V6L6 8H0Z" fill="#d8d8d8" stroke="#8a8a8a" stroke-width="0.8"/><path d="M0 2H6V8M6 2L8 0" stroke="#8a8a8a" stroke-width="0.8" fill="none" /></g><g transform="translate(7.5,7.5) scale(1.0)"><path d="M0 2L2 0H8V6L6 8H0Z" fill="#2f86cd" stroke="#2f86cd" stroke-width="0.8"/><path d="M0 2H6V8M6 2L8 0" stroke="#2f86cd" stroke-width="0.8" fill="none" /></g><path d="M7.5 9.5H13.5" stroke="#8cc4f0" stroke-width="0.8" fill="none" /></svg>
<div class="t" style="left:115px;top:445.5px;font-size:12px;line-height:16px;color:#000;letter-spacing:-0.338px;">Selections</div>
<svg class="r" style="left:93px;top:464.0px;" width="16" height="16" viewBox="0 0 16 16"><path d="M0 13.5H16" stroke="#2f86cd" stroke-width="1.1" fill="none" /><path d="M6 13L13 3" stroke="#777" stroke-width="3.4" fill="none" stroke-linecap="round"/><path d="M6.4 12.4L12.6 3.6" stroke="#fff" stroke-width="1.8" fill="none" stroke-linecap="round"/><path d="M7 11.6L10.5 6.6" stroke="#e03060" stroke-width="0.8" fill="none" /></svg>
<div class="t" style="left:115px;top:463.5px;font-size:12px;line-height:16px;color:#000;letter-spacing:-0.195px;">Domain Probe 1</div>
<svg class="r" style="left:77px;top:485.0px;" width="10" height="10" viewBox="0 0 10 10"><path d="M1.3 3L5 6.8L8.7 3" stroke="#111" stroke-width="1.4" fill="none"/></svg>
<svg class="r" style="left:93px;top:482.0px;" width="16" height="16" viewBox="0 0 16 16"><text x="-0.3" y="15" font-family="Liberation Sans" font-size="15" fill="#4a9ad8">a</text><rect x="9.3" y="10" width="5.2" height="1" fill="#2f86cd" /><rect x="9.3" y="13" width="5.2" height="1" fill="#2f86cd" /><circle cx="11" cy="3.8" r="2.6" fill="#eee" stroke="#777" stroke-width="1"/><circle cx="11" cy="3.8" r="1" fill="#e03060"/><path d="M12.6 2.2L15.5 -0.5" stroke="#777" stroke-width="1" fill="none" /></svg>
<div class="t" style="left:115px;top:481.5px;font-size:12px;line-height:16px;color:#000;letter-spacing:-0.128px;">Control Variables</div>
<svg class="r" style="left:113px;top:500.0px;" width="16" height="16" viewBox="0 0 16 16"><text x="-0.5" y="15" font-family="Liberation Sans" font-size="10.5" fill="#2f86cd">f(x)</text><circle cx="11" cy="3.8" r="2.6" fill="#eee" stroke="#777" stroke-width="1"/><circle cx="11" cy="3.8" r="1" fill="#e03060"/><path d="M12.6 2.2L15.5 -0.5" stroke="#777" stroke-width="1" fill="none" /></svg>
<div class="t" style="left:135px;top:499.5px;font-size:12px;line-height:16px;color:#000;letter-spacing:-0.005px;">Control Function 1</div>
<svg class="r" style="left:77px;top:521.0px;" width="10" height="10" viewBox="0 0 10 10"><path d="M3.3 1.2L7.1 5L3.3 8.8" stroke="#666" stroke-width="1.2" fill="none"/></svg>
<svg class="r" style="left:93px;top:518.0px;" width="16" height="16" viewBox="0 0 16 16"><rect x="0.6" y="0.6" width="14.8" height="14.8" fill="#fff" stroke="#3fa63f" stroke-width="1.1" /><path d="M7 2.5V13.5" stroke="#2f86cd" stroke-width="1" fill="none" /><path d="M7 1.5L5.6 4H8.4Z" fill="#2f86cd" /><path d="M7 13.5L2 8.5" stroke="#3fa63f" stroke-width="0.9" fill="none" /><path d="M7 13.5L14.5 8.2" stroke="#e03060" stroke-width="1" fill="none" /></svg>
<div class="t" style="left:115px;top:517.5px;font-size:12px;line-height:16px;color:#000;letter-spacing:-0.469px;">View 1</div>
<svg class="r" style="left:57px;top:539.0px;" width="10" height="10" viewBox="0 0 10 10"><path d="M3.3 1.2L7.1 5L3.3 8.8" stroke="#666" stroke-width="1.2" fill="none"/></svg>
<svg class="r" style="left:73px;top:536.0px;" width="16" height="16" viewBox="0 0 16 16"><rect x="0.6" y="0.6" width="14.8" height="14.8" fill="#fff" stroke="#3fa63f" stroke-width="1.1" /><path d="M2.5 13.5C6 9 8 5 8.5 2.5C10 6 11 10 14 13.5M1.5 3C4 7 9 9.5 14.5 8.5" stroke="#e8603c" stroke-width="1.1" fill="none" /></svg>
<div class="t" style="left:95px;top:535.5px;font-size:12px;line-height:16px;color:#000;letter-spacing:-0.270px;">Geometry 1</div>
<svg class="r" style="left:57px;top:557.0px;" width="10" height="10" viewBox="0 0 10 10"><path d="M3.3 1.2L7.1 5L3.3 8.8" stroke="#666" stroke-width="1.2" fill="none"/></svg>
<svg class="r" style="left:73px;top:554.0px;" width="16" height="16" viewBox="0 0 16 16"><rect x="1.2" y="4.0" width="4.0" height="4.0" fill="#f5a83a" /><rect x="1.2" y="8.8" width="4.0" height="4.0" fill="#f5a83a" /><rect x="6.1" y="1.4" width="4.0" height="4.0" fill="#f5a83a" /><rect x="6.1" y="6.2" width="4.0" height="4.0" fill="#f09428" /><rect x="6.1" y="11.0" width="4.0" height="4.0" fill="#c87a1a" /><rect x="11.0" y="4.0" width="4.0" height="4.0" fill="#f5a83a" /><rect x="11.0" y="8.8" width="4.0" height="4.0" fill="#c87a1a" /></svg>
<div class="t" style="left:95px;top:553.5px;font-size:12px;line-height:16px;color:#000;letter-spacing:-0.077px;">Materials</div>
<svg class="r" style="left:57px;top:575.0px;" width="10" height="10" viewBox="0 0 10 10"><path d="M1.3 3L5 6.8L8.7 3" stroke="#111" stroke-width="1.4" fill="none"/></svg>
<svg class="r" style="left:73px;top:572.0px;" width="16" height="16" viewBox="0 0 16 16"><rect x="2" y="1.2" width="13.5" height="6" fill="#e4e4e4" stroke="#888" stroke-width="1" rx="1.2" /><rect x="0.5" y="2.8" width="1.5" height="2.8" fill="#888" /><path d="M4.5 2.6V5.8" stroke="#e03060" stroke-width="1.1" fill="none" /><path d="M13 2.6V5.8" stroke="#2f86cd" stroke-width="1.1" fill="none" /><text x="0.5" y="16" font-family="Liberation Sans" font-size="8.5" fill="#2b5ba7" letter-spacing="0.8">Li+</text></svg>
<div class="t" style="left:95px;top:571.5px;font-size:12px;line-height:16px;color:#000;letter-spacing:0.119px;">Lithium-Ion Battery</div>
<svg class="r" style="left:77px;top:593.0px;" width="10" height="10" viewBox="0 0 10 10"><path d="M3.3 1.2L7.1 5L3.3 8.8" stroke="#666" stroke-width="1.2" fill="none"/></svg>
<svg class="r" style="left:93px;top:590.0px;" width="16" height="16" viewBox="0 0 16 16"><text x="0" y="6.6" font-family="Liberation Mono" font-weight="bold" font-size="9.5" fill="#222">D</text><rect x="8" y="0.8" width="7.5" height="5.6" fill="#e4e4e4" stroke="#888" stroke-width="0.9" rx="0.8" /><path d="M13.2 2V5.2" stroke="#2f86cd" stroke-width="1" fill="none" /><text x="1" y="16" font-family="Liberation Sans" font-size="8.5" fill="#2b5ba7" letter-spacing="0.8">Li+</text></svg>
<div class="t" style="left:115px;top:589.5px;font-size:12px;line-height:16px;color:#000;letter-spacing:-0.130px;">SOC and Initial Charge Distribution 1</div>
<svg class="r" style="left:93px;top:608.0px;" width="16" height="16" viewBox="0 0 16 16"><text x="0" y="6.6" font-family="Liberation Mono" font-weight="bold" font-size="9.5" fill="#222">D</text><path d="M7.5 7.5H16" stroke="#2f86cd" stroke-width="1" fill="none" /></svg>
<div class="t" style="left:115px;top:607.5px;font-size:12px;line-height:16px;color:#000;letter-spacing:-0.429px;">Separator 1</div>
<svg class="r" style="left:93px;top:626.0px;" width="16" height="16" viewBox="0 0 16 16"><text x="0" y="6.6" font-family="Liberation Mono" font-weight="bold" font-size="9.5" fill="#222">D</text><path d="M7.5 7.5H13" stroke="#999" stroke-width="1" fill="none" /><rect x="12.6" y="6" width="3.3" height="3.3" fill="#2f86cd" /></svg>
<div class="t" style="left:115px;top:625.5px;font-size:12px;line-height:16px;color:#000;letter-spacing:-0.263px;">No Flux 1</div>
<svg class="r" style="left:93px;top:644.0px;" width="16" height="16" viewBox="0 0 16 16"><text x="0" y="6.6" font-family="Liberation Mono" font-weight="bold" font-size="9.5" fill="#222">D</text><path d="M7.5 7.5H13" stroke="#999" stroke-width="1" fill="none" /><rect x="12.6" y="6" width="3.3" height="3.3" fill="#2f86cd" /></svg>
<div class="t" style="left:115px;top:643.5px;font-size:12px;line-height:16px;color:#000;letter-spacing:-0.117px;">Insulation 1</div>
<svg class="r" style="left:93px;top:662.0px;" width="16" height="16" viewBox="0 0 16 16"><text x="0" y="6.6" font-family="Liberation Mono" font-weight="bold" font-size="9.5" fill="#222">D</text><path d="M7.5 7.5H16" stroke="#2f86cd" stroke-width="1" fill="none" /></svg>
<div class="t" style="left:115px;top:661.5px;font-size:12px;line-height:16px;color:#000;letter-spacing:-0.261px;">Initial Values 1</div>
<svg class="r" style="left:77px;top:683.0px;" width="10" height="10" viewBox="0 0 10 10"><path d="M3.3 1.2L7.1 5L3.3 8.8" stroke="#666" stroke-width="1.2" fill="none"/></svg>
<svg class="r" style="left:93px;top:680.0px;" width="16" height="16" viewBox="0 0 16 16"><path d="M0 7.5H16" stroke="#2f86cd" stroke-width="1" fill="none" /></svg>
<div class="t" style="left:115px;top:679.5px;font-size:12px;line-height:16px;color:#000;letter-spacing:-0.115px;">Porous Electrode - Negative</div>
<svg class="r" style="left:77px;top:701.0px;" width="10" height="10" viewBox="0 0 10 10"><path d="M3.3 1.2L7.1 5L3.3 8.8" stroke="#666" stroke-width="1.2" fill="none"/></svg>
<svg class="r" style="left:93px;top:698.0px;" width="16" height="16" viewBox="0 0 16 16"><path d="M0 7.5H16" stroke="#2f86cd" stroke-width="1" fill="none" /></svg>
<div class="t" style="left:115px;top:697.5px;font-size:12px;line-height:16px;color:#000;letter-spacing:-0.139px;">Porous Electrode - Positive</div>
<svg class="r" style="left:93px;top:716.0px;" width="16" height="16" viewBox="0 0 16 16"><path d="M0 7.5H12.5" stroke="#999" stroke-width="1" fill="none" /><rect x="12.4" y="6" width="3.2" height="3.2" fill="#2f86cd" /></svg>
<div class="t" style="left:115px;top:715.5px;font-size:12px;line-height:16px;color:#000;letter-spacing:-0.219px;">Electric Ground 1</div>
<svg class="r" style="left:93px;top:734.0px;" width="16" height="16" viewBox="0 0 16 16"><path d="M0 7.5H12.5" stroke="#999" stroke-width="1" fill="none" /><rect x="12.4" y="6" width="3.2" height="3.2" fill="#2f86cd" /></svg>
<div class="t" style="left:115px;top:733.5px;font-size:12px;line-height:16px;color:#000;letter-spacing:-0.215px;">Electrode Current 1</div>
<svg class="r" style="left:57px;top:755.0px;" width="10" height="10" viewBox="0 0 10 10"><path d="M3.3 1.2L7.1 5L3.3 8.8" stroke="#666" stroke-width="1.2" fill="none"/></svg>
<svg class="r" style="left:73px;top:752.0px;" width="16" height="16" viewBox="0 0 16 16"><text x="4.5" y="6.5" font-family="Liberation Sans" font-size="8" fill="#2f86cd">c</text><path d="M10 3.8H15M12.5 1.3V6.3M10.7 2L14.3 5.6M14.3 2L10.7 5.6" stroke="#666" stroke-width="0.9" fill="none" /><path d="M2.5 8H12" stroke="#2b5ba7" stroke-width="1" fill="none" /><text x="2.5" y="16" font-family="Liberation Sans" font-size="9" fill="#2b5ba7">dt</text></svg>
<div class="t" style="left:95px;top:751.5px;font-size:12px;line-height:16px;color:#000;letter-spacing:-0.471px;">Global ODEs and DAEs</div>
<svg class="r" style="left:73px;top:770.0px;" width="16" height="16" viewBox="0 0 16 16"><circle cx="9" cy="3.6" r="2.6" fill="none" stroke="#8a8a8a" stroke-width="0.8"/><path d="M6 1L12 6.2M12 1L6 6.2M9 0V7.2" stroke="#8a8a8a" stroke-width="0.8" fill="none" /><circle cx="9" cy="3.6" r="1" fill="#3fa63f"/><path d="M2 10.5L8 6.5" stroke="#2f86cd" stroke-width="1" fill="none" /><path d="M6.5 14.5V9H11.5V14.5M6.5 14.5H14V9.5" stroke="#666" stroke-width="1" fill="none" /><rect x="0.8" y="9.5" width="3" height="3" fill="#2f86cd" /><rect x="5.6" y="8.6" width="3" height="4" fill="#3fa63f" /><rect x="9.8" y="8.6" width="3" height="4" fill="#e8603c" /><path d="M12 8H16V12.4H14.4Z" fill="#e0108a" /></svg>
<div class="t" style="left:95px;top:769.5px;font-size:12px;line-height:16px;color:#000;letter-spacing:0.136px;">Multiphysics</div>
<svg class="r" style="left:73px;top:788.0px;" width="16" height="16" viewBox="0 0 16 16"><path d="M8 1.2L15.6 14.6H0.4Z" fill="#e2e2e2" stroke="#8a8a8a" stroke-width="1.1"/><path d="M4.2 8H11.8L8 14.6ZM6 5H10M2.4 11.2H13.6M6 11.2L8 8L10 11.2M4.2 8L6 11.2L4 14.6M11.8 8L10 11.2L12 14.6" stroke="#a5a5a5" stroke-width="0.7" fill="none" /></svg>
<div class="t" style="left:95px;top:787.5px;font-size:12px;line-height:16px;color:#000;letter-spacing:-0.393px;">Mesh 1</div>
<svg class="r" style="left:37px;top:809.0px;" width="10" height="10" viewBox="0 0 10 10"><path d="M3.3 1.2L7.1 5L3.3 8.8" stroke="#666" stroke-width="1.2" fill="none"/></svg>
<svg class="r" style="left:53px;top:806.0px;" width="16" height="16" viewBox="0 0 16 16"><g transform="translate(-0.3,-0.2) scale(0.52)"><g transform="translate(0,0)"><path d="M2.2 16.2C2 11.5 5 9.3 7.6 12L12.9 16.4" stroke="#2aa0bd" stroke-width="2.3" fill="none" /><circle cx="16.3" cy="18" r="4" fill="none" stroke="#2aa0bd" stroke-width="2.3"/><circle cx="27" cy="17.5" r="4.3" fill="none" stroke="#2aa0bd" stroke-width="2.3"/><path d="M20.2 17.6Q21.5 16.6 22.8 17.4" stroke="#2aa0bd" stroke-width="2.3" fill="none" /><path d="M20.6 11.6C22.5 8.6 26.5 9 28.6 11.6L30.6 14.8" stroke="#2aa0bd" stroke-width="2.3" fill="none" /></g></g></svg>
<div class="t" style="left:75px;top:805.5px;font-size:12px;line-height:16px;color:#000;letter-spacing:-0.088px;">Study 1: Initial</div>
<svg class="r" style="left:37px;top:827.0px;" width="10" height="10" viewBox="0 0 10 10"><path d="M1.3 3L5 6.8L8.7 3" stroke="#111" stroke-width="1.4" fill="none"/></svg>
<svg class="r" style="left:53px;top:824.0px;" width="16" height="16" viewBox="0 0 16 16"><g transform="translate(-0.3,-0.2) scale(0.52)"><g transform="translate(0,0)"><path d="M2.2 16.2C2 11.5 5 9.3 7.6 12L12.9 16.4" stroke="#2aa0bd" stroke-width="2.3" fill="none" /><circle cx="16.3" cy="18" r="4" fill="none" stroke="#2aa0bd" stroke-width="2.3"/><circle cx="27" cy="17.5" r="4.3" fill="none" stroke="#2aa0bd" stroke-width="2.3"/><path d="M20.2 17.6Q21.5 16.6 22.8 17.4" stroke="#2aa0bd" stroke-width="2.3" fill="none" /><path d="M20.6 11.6C22.5 8.6 26.5 9 28.6 11.6L30.6 14.8" stroke="#2aa0bd" stroke-width="2.3" fill="none" /></g></g></svg>
<div class="t" style="left:75px;top:823.5px;font-size:12px;line-height:16px;color:#000;letter-spacing:-0.004px;">Study 2: Optimization</div>
<svg class="r" style="left:73px;top:842.0px;" width="16" height="16" viewBox="0 0 16 16"><text x="0.8" y="5.8" font-family="Liberation Sans" font-size="6.6" fill="#1a8fb0" letter-spacing="0.9">123</text><rect x="0.3" y="7.2" width="4.2" height="1.4" fill="#1a8fb0" /><rect x="0.3" y="9.5" width="4.2" height="1.4" fill="#1a8fb0" /><rect x="0.3" y="11.8" width="4.2" height="1.4" fill="#1a8fb0" /><rect x="0.3" y="14.1" width="4.2" height="1.4" fill="#1a8fb0" /><rect x="5.3999999999999995" y="7.2" width="4.2" height="1.4" fill="#1a8fb0" /><rect x="5.3999999999999995" y="9.5" width="4.2" height="1.4" fill="#1a8fb0" /><rect x="5.3999999999999995" y="11.8" width="4.2" height="1.4" fill="#1a8fb0" /><rect x="5.3999999999999995" y="14.1" width="4.2" height="1.4" fill="#1a8fb0" /><rect x="10.5" y="7.2" width="4.2" height="1.4" fill="#1a8fb0" /><rect x="10.5" y="9.5" width="4.2" height="1.4" fill="#1a8fb0" /><rect x="10.5" y="11.8" width="4.2" height="1.4" fill="#1a8fb0" /><rect x="10.5" y="14.1" width="4.2" height="1.4" fill="#1a8fb0" /></svg>
<div class="t" style="left:95px;top:841.5px;font-size:12px;line-height:16px;color:#000;letter-spacing:-0.254px;">Parametric Sweep</div>
<div class="r" style="left:13px;top:859.0px;width:312px;height:18px;background:#dedee0;"></div>
<svg class="r" style="left:73px;top:860.0px;" width="16" height="16" viewBox="0 0 16 16"><path d="M1.5 1V14.5H15" stroke="#777" stroke-width="1" fill="none" /><path d="M1.5 -0.5L0 2.2H3Z" fill="#777" /><path d="M16.3 14.5L13.6 13V16Z" fill="#777" /><circle cx="8.5" cy="8.2" r="4" fill="none" stroke="#1a9bb0" stroke-width="1.2"/><circle cx="8.5" cy="8.2" r="1.5" fill="#1a9bb0"/><path d="M8.5 8.2L14 2.6" stroke="#777" stroke-width="1" fill="none" /><path d="M12.4 1L15.8 1L15.8 4.4Z" fill="#777" /></svg>
<div class="t" style="left:101px;top:859.5px;font-size:12px;line-height:16px;color:#000;letter-spacing:-0.037px;">General Optimization</div>
<svg class="r" style="left:73px;top:878.0px;" width="16" height="16" viewBox="0 0 16 16"><path d="M1.5 1V14.5H15" stroke="#777" stroke-width="1" fill="none" /><path d="M1.5 -0.5L0 2.2H3Z" fill="#777" /><path d="M16.3 14.5L13.6 13V16Z" fill="#777" /><path d="M3 9.5C6 9.5 7 7 9 7" stroke="#1a9bb0" stroke-width="1.1" fill="none" /><path d="M3 4.5C7 4.5 8 11 15 11" stroke="#999" stroke-width="0.9" fill="none" /><path d="M8.5 0.5V13" stroke="#555" stroke-width="0.8" fill="none" stroke-dasharray="1 1.2"/><path d="M9 8C10.5 7 10.5 1.5 12 1.5S13.5 8 15.5 8.5" stroke="#1a9bb0" stroke-width="1.1" fill="none" /></svg>
<div class="t" style="left:107px;top:877.5px;font-size:12px;line-height:16px;color:#000;letter-spacing:-0.020px;">Step 1: Current Distribution Initialization</div>
<svg class="r" style="left:73px;top:896.0px;" width="16" height="16" viewBox="0 0 16 16"><path d="M1.5 1V14.5H15" stroke="#777" stroke-width="1" fill="none" /><path d="M1.5 -0.5L0 2.2H3Z" fill="#777" /><path d="M16.3 14.5L13.6 13V16Z" fill="#777" /><path d="M3 2C4 8 6 11.5 15 12" stroke="#999" stroke-width="0.9" fill="none" /><path d="M3.5 12C7 12 6.5 2 9 2S11 9.5 15.5 9.8" stroke="#1a9bb0" stroke-width="1.1" fill="none" /></svg>
<div class="t" style="left:107px;top:895.5px;font-size:12px;line-height:16px;color:#000;letter-spacing:-0.203px;">Step 2: Time Dependent</div>
<svg class="r" style="left:57px;top:917.0px;" width="10" height="10" viewBox="0 0 10 10"><path d="M3.3 1.2L7.1 5L3.3 8.8" stroke="#666" stroke-width="1.2" fill="none"/></svg>
<svg class="r" style="left:73px;top:914.0px;" width="16" height="16" viewBox="0 0 16 16"><path d="M0.8 3V16M6.2 6V16M11.6 9V16" stroke="#777" stroke-width="1" fill="none" /><rect x="0.5" y="0.5" width="4.5" height="3.4" fill="#1a9bb0" /><rect x="5.8" y="3.8" width="4" height="3.2" fill="#1a9bb0" /><rect x="10.6" y="7" width="3.6" height="3.2" fill="#1a9bb0" /><rect x="13.2" y="10.4" width="3" height="3.2" fill="#1a9bb0" /></svg>
<div class="t" style="left:95px;top:913.5px;font-size:12px;line-height:16px;color:#000;letter-spacing:-0.036px;">Solver Configurations</div>
<svg class="r" style="left:57px;top:935.0px;" width="10" height="10" viewBox="0 0 10 10"><path d="M3.3 1.2L7.1 5L3.3 8.8" stroke="#666" stroke-width="1.2" fill="none"/></svg>
<svg class="r" style="left:73px;top:932.0px;" width="16" height="16" viewBox="0 0 16 16"><path d="M4.5 1H13V6.6H4.5Z" fill="#a9c4ee" stroke="#2f86cd" stroke-width="0.8"/><path d="M3.6 7H13.6L11 10H0.3Z" fill="#2f86cd" /><path d="M13.6 8H15.5V13H2V14M8 13V14M14 13V14" stroke="#666" stroke-width="0.9" fill="none" /><rect x="0.8" y="13.6" width="3" height="2.6" fill="#1a9bb0" /><rect x="6.5" y="13.6" width="3" height="2.6" fill="#3fa63f" /><rect x="12.2" y="13.6" width="3" height="2.6" fill="#f5a020" /></svg>
<div class="t" style="left:95px;top:931.5px;font-size:12px;line-height:16px;color:#000;letter-spacing:-0.005px;">Job Configurations</div>
<svg class="r" style="left:37px;top:953.0px;" width="10" height="10" viewBox="0 0 10 10"><path d="M3.3 1.2L7.1 5L3.3 8.8" stroke="#666" stroke-width="1.2" fill="none"/></svg>
<svg class="r" style="left:53px;top:950.0px;" width="16" height="16" viewBox="0 0 16 16"><path d="M2.5 0.8H10.5V8" stroke="#8a8a8a" stroke-width="1" fill="#f2f2f2" /><path d="M1 2.4H9V10.5H0.3" stroke="#8a8a8a" stroke-width="1" fill="#f2f2f2" /><path d="M0.3 8.5L3.5 14.5H16" stroke="#8a8a8a" stroke-width="1" fill="#ddd" /><rect x="3.6" y="3.8" width="12" height="10.2" fill="#f8f8f8" stroke="#8a8a8a" stroke-width="1" /><rect x="5.6" y="5.2" width="8" height="6.6" fill="#dca8d2" /><rect x="6.6" y="6.2" width="6" height="4.6" fill="#b2449c" /></svg>
<div class="t" style="left:75px;top:949.5px;font-size:12px;line-height:16px;color:#000;letter-spacing:-0.432px;">Results</div>
<div class="p" style="left:339px;top:177px;width:445px;height:869px;"></div>
<div class="t" style="left:346px;top:185.0px;font-size:22px;line-height:28px;color:#3f8fd6;letter-spacing:-0.812px;">Settings</div>
<svg class="r" style="left:731px;top:193.2px;" width="9" height="6" viewBox="0 0 9 6"><path d="M0.7 0.8L4.5 4.6L8.3 0.8" stroke="#444" stroke-width="1.1" fill="none"/></svg>
<svg class="r" style="left:750px;top:191px;" width="9" height="9" viewBox="0 0 9 9"><path d="M0.5 0.5H8.5V8.5H0.5Z M0.5 2H8.5" stroke="#444" stroke-width="1" fill="none"/><rect x="0.5" y="0.5" width="8" height="2" fill="#444"/></svg>
<svg class="r" style="left:768px;top:189.5px;" width="7" height="11" viewBox="0 0 7 11"><path d="M1.5 0.5H5.5M2 0.5V5.5M5 0.5V5.5M0.3 5.5H6.7M3.5 5.5V10.5" stroke="#444" stroke-width="1" fill="none"/><rect x="3.6" y="0.5" width="1.4" height="5" fill="#444"/></svg>
<div class="t" style="left:345px;top:213.7px;font-size:13px;line-height:16px;color:#3a62b0;letter-spacing:-0.006px;">General Optimization</div>
<div class="r" style="left:350px;top:239px;width:10px;height:2px;background:#1a9bb0;"></div>
<div class="r" style="left:350px;top:243px;width:10px;height:2px;background:#1a9bb0;"></div>
<div class="t" style="left:366px;top:234.0px;font-size:12px;line-height:16px;color:#000;letter-spacing:0.185px;">Compute</div>
<svg class="r" style="left:423px;top:234px;" width="16" height="16" viewBox="0 0 16 16"><path d="M0.5 8H6M4.8 2.5V13.5" stroke="#a9a9a9" stroke-width="1" fill="none" /><path d="M8 8H15M11.8 4.8L15 8L11.8 11.2" stroke="#a9a9a9" stroke-width="1.1" fill="none" /></svg>
<div class="t" style="left:443px;top:234.0px;font-size:12px;line-height:16px;color:#7a7a7a;letter-spacing:0.119px;">Continue</div>
<svg class="r" style="left:499px;top:234px;" width="16" height="16" viewBox="0 0 16 16"><path d="M13.4 8.6A5.4 5.4 0 1 1 10.2 3.2" stroke="#2f86cd" stroke-width="1.5" fill="none" /><path d="M9.2 0.8L15 1.4L11.4 6.4Z" fill="#2f86cd" /></svg>
<div class="t" style="left:519px;top:234.0px;font-size:12px;line-height:16px;color:#000;letter-spacing:-0.028px;">Update Solution</div>
<div class="t" style="left:344px;top:267.0px;font-size:12px;line-height:16px;color:#000;letter-spacing:-0.285px;">Label:</div>
<div class="r" style="left:385px;top:266px;width:366px;height:18px;background:#fff;border:1px solid #c6c6c6;"></div>
<div class="t" style="left:388px;top:267.0px;font-size:12px;line-height:16px;color:#000;letter-spacing:-0.037px;">General Optimization</div>
<div class="r" style="left:759px;top:264px;width:20px;height:22px;background:#ececec;border:1px solid #d0d0d0;border-radius:2px;"></div>
<svg class="r" style="left:761px;top:267px;" width="16" height="16" viewBox="0 0 16 16"><rect x="2" y="2.5" width="13" height="11.5" fill="#fff" stroke="#777" stroke-width="1" /><rect x="2" y="2.5" width="13" height="2.6" fill="#999" /><path d="M6 8.5H13M6 11H13" stroke="#2aa07a" stroke-width="1.1" fill="none" /><path d="M1 14.8L1.4 11.4L2.5 12.4L4.2 10.6L5.2 11.6L3.4 13.4L4.5 14.4Z" fill="#2aa07a" /></svg>
<div class="r" style="left:339px;top:295px;width:445px;height:1px;background:#e3e4e8;"></div>
<svg class="r" style="left:344px;top:304px;" width="10" height="10" viewBox="0 0 10 10"><path d="M3.3 1.2L7.1 5L3.3 8.8" stroke="#222" stroke-width="1.2" fill="none"/></svg>
<div class="t" style="left:365px;top:300.4px;font-size:14px;line-height:18px;color:#2f5fae;letter-spacing:-0.125px;">Optimization Solver</div>
<div class="r" style="left:339px;top:324px;width:445px;height:1px;background:#e3e4e8;"></div>
<svg class="r" style="left:344px;top:333px;" width="10" height="10" viewBox="0 0 10 10"><path d="M3.3 1.2L7.1 5L3.3 8.8" stroke="#222" stroke-width="1.2" fill="none"/></svg>
<div class="t" style="left:365px;top:329.4px;font-size:14px;line-height:18px;color:#2f5fae;letter-spacing:-0.277px;">Solver Settings</div>
<div class="r" style="left:339px;top:353px;width:445px;height:1px;background:#e3e4e8;"></div>
<svg class="r" style="left:344px;top:362px;" width="10" height="10" viewBox="0 0 10 10"><path d="M1.2 3.2L5 7L8.8 3.2" stroke="#2b5ba7" stroke-width="1.2" fill="none"/></svg>
<div class="t" style="left:365px;top:358.4px;font-size:14px;line-height:18px;color:#2f5fae;letter-spacing:-0.163px;">Objective Function</div>
<svg class="r" style="left:705px;top:359px;" width="16" height="16" viewBox="0 0 16 16"><path d="M8.5 1V14M2 7.5H15" stroke="#2f86cd" stroke-width="1" fill="none" /></svg>
<svg class="r" style="left:722px;top:359px;" width="16" height="16" viewBox="0 0 16 16"><path d="M4.5 6.2H11.5L8 10.4Z" fill="#111" /></svg>
<svg class="r" style="left:745px;top:359px;" width="16" height="16" viewBox="0 0 16 16"><path d="M9.9 4.9H0.8V12.1H9.9M12.9 4.9H16.8V12.1H12.9" stroke="#2f86cd" stroke-width="1.2" fill="none" /><rect x="2.8" y="7.1" width="6.9" height="2.8" fill="#2f86cd" /><rect x="13" y="7.1" width="1.9" height="2.8" fill="#2f86cd" /><path d="M8.2 0.4Q11.4 0.4 11.4 2.2V13.8Q11.4 15.6 8.2 15.6M14.6 0.4Q11.4 0.4 11.4 2.2M14.6 15.6Q11.4 15.6 11.4 13.8" stroke="#2f86cd" stroke-width="1" fill="none" /></svg>
<svg class="r" style="left:762px;top:359px;" width="16" height="16" viewBox="0 0 16 16"><path d="M4.5 6.2H11.5L8 10.4Z" fill="#111" /></svg>
<svg class="r" style="left:344px;top:389px;" width="16" height="16" viewBox="0 0 16 16"><circle cx="8" cy="8" r="6.3" fill="#fff" stroke="#3f8fd6" stroke-width="1.1"/><text x="6.1" y="11.8" font-family="Liberation Serif" font-style="italic" font-weight="bold" font-size="10.5" fill="#3f8fd6">i</text></svg>
<div class="t" style="left:371px;top:389.5px;font-size:12px;line-height:16px;color:#000;letter-spacing:-0.045px;">The objective is only evaluated at the final time.</div>
<div class="r" style="left:344px;top:411px;width:435px;height:119px;background:#fff;border:1px solid #c9c9c9;border-bottom:2px solid #d0d0d0;"></div>
<div class="r" style="left:345px;top:412px;width:431px;height:27px;background:#f0f0f0;"></div>
<div class="r" style="left:448px;top:412px;width:1px;height:77px;background:#bdbdbd;"></div>
<div class="r" style="left:634px;top:412px;width:1px;height:77px;background:#bdbdbd;"></div>
<div class="r" style="left:776px;top:412px;width:1px;height:77px;background:#bdbdbd;"></div>
<div class="r" style="left:345px;top:463px;width:432px;height:1px;background:#bdbdbd;"></div>
<div class="r" style="left:345px;top:489px;width:432px;height:1px;background:#bdbdbd;"></div>
<svg class="r" style="left:347px;top:414px;" width="10" height="8" viewBox="0 0 10 8"><path d="M1 0.5L5 4L1 7.5Z M5.5 0.5L9.5 4L5.5 7.5Z" fill="#000"/></svg>
<div class="t" style="left:363px;top:420.0px;font-size:12px;line-height:16px;color:#000;letter-spacing:-0.337px;">Expression</div>
<div class="t" style="left:454px;top:420.0px;font-size:12px;line-height:16px;color:#000;letter-spacing:-0.004px;">Description</div>
<div class="t" style="left:640px;top:420.0px;font-size:12px;line-height:16px;color:#000;letter-spacing:-0.171px;">Evaluate for</div>
<div class="r" style="left:345px;top:439px;width:103px;height:24px;background:#fff;border:1px solid #4a94dc;"></div>
<div class="t" style="left:348px;top:443.0px;font-size:12px;line-height:16px;color:#000;letter-spacing:-0.276px;">comp1.avg_C_rate</div>
<div class="t" style="left:452px;top:443.0px;font-size:12px;line-height:16px;color:#000;letter-spacing:-0.101px;">Average C rate (to be maximized)</div>
<div class="r" style="left:637px;top:441px;width:137px;height:20px;background:#f3f3f4;border:1px solid #e9e9ea;border-radius:2px;"></div>
<div class="t" style="left:650px;top:443.0px;font-size:12px;line-height:16px;color:#8a8a8a;letter-spacing:-0.093px;">Time Dependent</div>
<svg class="r" style="left:762px;top:448px;" width="7" height="5" viewBox="0 0 7 5"><path d="M0 0.5H7L3.5 4.5Z" fill="#d8d8d8"/></svg>
<div class="r" style="left:637px;top:467px;width:137px;height:20px;background:#f3f3f4;border:1px solid #e9e9ea;border-radius:2px;"></div>
<div class="t" style="left:650px;top:469.0px;font-size:12px;line-height:16px;color:#8a8a8a;letter-spacing:-0.093px;">Time Dependent</div>
<svg class="r" style="left:762px;top:474px;" width="7" height="5" viewBox="0 0 7 5"><path d="M0 0.5H7L3.5 4.5Z" fill="#d8d8d8"/></svg>
<svg class="r" style="left:346px;top:537px;" width="16" height="16" viewBox="0 0 16 16"><path d="M8 15V3" stroke="#a9a9a9" stroke-width="1.2" fill="none" /><path d="M8 0.8L4.6 6H11.4Z" fill="#a9a9a9" /></svg>
<svg class="r" style="left:369px;top:537px;" width="16" height="16" viewBox="0 0 16 16"><path d="M8 1V13" stroke="#a9a9a9" stroke-width="1.2" fill="none" /><path d="M8 15.2L4.6 10H11.4Z" fill="#a9a9a9" /></svg>
<svg class="r" style="left:392px;top:537px;" width="16" height="16" viewBox="0 0 16 16"><path d="M1.5 2.5H3M5 2.5H14.5M1.5 6.5H3M5 6.5H14.5" stroke="#888" stroke-width="1.2" fill="none" /><path d="M1.5 11H3M5 11H9" stroke="#2f86cd" stroke-width="1.4" fill="none" /><path d="M10.8 9L15 13.2M15 9L10.8 13.2" stroke="#2f86cd" stroke-width="1.3" fill="none" /></svg>
<svg class="r" style="left:416px;top:537px;" width="16" height="16" viewBox="0 0 16 16"><path d="M9.9 4.9H0.8V12.1H9.9M12.9 4.9H16.8V12.1H12.9" stroke="#2f86cd" stroke-width="1.2" fill="none" /><rect x="2.8" y="7.1" width="6.9" height="2.8" fill="#2f86cd" /><rect x="13" y="7.1" width="1.9" height="2.8" fill="#2f86cd" /><path d="M8.2 0.4Q11.4 0.4 11.4 2.2V13.8Q11.4 15.6 8.2 15.6M14.6 0.4Q11.4 0.4 11.4 2.2M14.6 15.6Q11.4 15.6 11.4 13.8" stroke="#2f86cd" stroke-width="1" fill="none" /></svg>
<svg class="r" style="left:432px;top:537px;" width="16" height="16" viewBox="0 0 16 16"><path d="M4.5 6.2H11.5L8 10.4Z" fill="#111" /></svg>
<div class="t" style="left:344px;top:561.0px;font-size:12px;line-height:16px;color:#000;letter-spacing:-0.472px;">Type:</div>
<div class="r" style="left:440px;top:558.5px;width:339px;height:21px;background:#eeeeef;border:1px solid #d9d9db;border-radius:3px;"></div>
<div class="t" style="left:453px;top:561.0px;font-size:12px;line-height:16px;color:#000;letter-spacing:0.164px;">Maximization</div>
<svg class="r" style="left:764px;top:566.5px;" width="8" height="5" viewBox="0 0 8 5"><path d="M0 0H8L4 5Z" fill="#111"/></svg>
<div class="t" style="left:344px;top:588.0px;font-size:12px;line-height:16px;color:#000;letter-spacing:0.032px;">Solution:</div>
<div class="r" style="left:440px;top:585.5px;width:339px;height:21px;background:#eeeeef;border:1px solid #d9d9db;border-radius:3px;"></div>
<div class="t" style="left:453px;top:588.0px;font-size:12px;line-height:16px;color:#000;letter-spacing:0.327px;">Auto</div>
<svg class="r" style="left:764px;top:593.5px;" width="8" height="5" viewBox="0 0 8 5"><path d="M0 0H8L4 5Z" fill="#111"/></svg>
<div class="r" style="left:345px;top:612px;width:14px;height:14px;background:#fff;border:1px solid #333;"></div>
<svg class="r" style="left:347px;top:614px;" width="10" height="10" viewBox="0 0 10 10"><path d="M1 5.2L3.8 8.2L9.2 1.5" stroke="#111" stroke-width="1.7" fill="none"/></svg>
<svg class="r" style="left:359px;top:612px;" width="420" height="15" viewBox="0 0 420 15"><rect x="0.5" y="0.5" width="419" height="14" fill="none" stroke="#444" stroke-width="1" stroke-dasharray="2 2"/></svg>
<div class="t" style="left:364px;top:611.0px;font-size:12px;line-height:16px;color:#000;letter-spacing:0.123px;">Condition-based final time</div>
<svg class="r" style="left:344px;top:634px;" width="16" height="16" viewBox="0 0 16 16"><circle cx="8" cy="8" r="6.3" fill="#fff" stroke="#3f8fd6" stroke-width="1.1"/><text x="6.1" y="11.8" font-family="Liberation Serif" font-style="italic" font-weight="bold" font-size="10.5" fill="#3f8fd6">i</text></svg>
<div class="t" style="left:371px;top:634.0px;font-size:12px;line-height:16px;color:#000;letter-spacing:-0.066px;">Time-dependent solver terminates if stop expression becomes negative.</div>
<div class="t" style="left:344px;top:656.0px;font-size:12px;line-height:16px;color:#000;letter-spacing:-0.213px;">Stop expression:</div>
<div class="r" style="left:440px;top:655px;width:329px;height:18px;background:#fff;border:1px solid #c6c6c6;"></div>
<div class="t" style="left:443px;top:656.0px;font-size:12px;line-height:16px;color:#000;letter-spacing:-0.208px;">t_1C-t*comp1.avg_C_rate</div>
<div class="r" style="left:339px;top:684px;width:445px;height:1px;background:#e3e4e8;"></div>
<svg class="r" style="left:344px;top:693px;" width="10" height="10" viewBox="0 0 10 10"><path d="M3.3 1.2L7.1 5L3.3 8.8" stroke="#222" stroke-width="1.2" fill="none"/></svg>
<div class="t" style="left:365px;top:689.4px;font-size:14px;line-height:18px;color:#2f5fae;letter-spacing:-0.245px;">Control Variables and Parameters</div>
<div class="r" style="left:339px;top:713px;width:445px;height:1px;background:#e3e4e8;"></div>
<svg class="r" style="left:344px;top:722px;" width="10" height="10" viewBox="0 0 10 10"><path d="M3.3 1.2L7.1 5L3.3 8.8" stroke="#222" stroke-width="1.2" fill="none"/></svg>
<div class="t" style="left:365px;top:718.4px;font-size:14px;line-height:18px;color:#2f5fae;letter-spacing:-0.164px;">Constraints</div>
<svg class="r" style="left:705px;top:719px;" width="16" height="16" viewBox="0 0 16 16"><path d="M8.5 1V14M2 7.5H15" stroke="#2f86cd" stroke-width="1" fill="none" /></svg>
<svg class="r" style="left:722px;top:719px;" width="16" height="16" viewBox="0 0 16 16"><path d="M4.5 6.2H11.5L8 10.4Z" fill="#111" /></svg>
<svg class="r" style="left:745px;top:719px;" width="16" height="16" viewBox="0 0 16 16"><path d="M9.9 4.9H0.8V12.1H9.9M12.9 4.9H16.8V12.1H12.9" stroke="#2f86cd" stroke-width="1.2" fill="none" /><rect x="2.8" y="7.1" width="6.9" height="2.8" fill="#2f86cd" /><rect x="13" y="7.1" width="1.9" height="2.8" fill="#2f86cd" /><path d="M8.2 0.4Q11.4 0.4 11.4 2.2V13.8Q11.4 15.6 8.2 15.6M14.6 0.4Q11.4 0.4 11.4 2.2M14.6 15.6Q11.4 15.6 11.4 13.8" stroke="#2f86cd" stroke-width="1" fill="none" /></svg>
<svg class="r" style="left:762px;top:719px;" width="16" height="16" viewBox="0 0 16 16"><path d="M4.5 6.2H11.5L8 10.4Z" fill="#111" /></svg>
<div class="r" style="left:339px;top:742px;width:445px;height:1px;background:#e3e4e8;"></div>
<svg class="r" style="left:344px;top:751px;" width="10" height="10" viewBox="0 0 10 10"><path d="M3.3 1.2L7.1 5L3.3 8.8" stroke="#222" stroke-width="1.2" fill="none"/></svg>
<div class="t" style="left:365px;top:747.4px;font-size:14px;line-height:18px;color:#2f5fae;letter-spacing:0.329px;">Output</div>
<div class="p" style="left:792px;top:177px;width:1121px;height:506px;"></div>
<div class="t" style="left:799px;top:185.0px;font-size:22px;line-height:28px;color:#3563ab;letter-spacing:-1.004px;">Graphics</div>
<svg class="r" style="left:1860px;top:193.2px;" width="9" height="6" viewBox="0 0 9 6"><path d="M0.7 0.8L4.5 4.6L8.3 0.8" stroke="#b0b0b0" stroke-width="1.1" fill="none"/></svg>
<svg class="r" style="left:1879px;top:191px;" width="9" height="9" viewBox="0 0 9 9"><path d="M0.5 0.5H8.5V8.5H0.5Z M0.5 2H8.5" stroke="#b0b0b0" stroke-width="1" fill="none"/><rect x="0.5" y="0.5" width="8" height="2" fill="#b0b0b0"/></svg>
<svg class="r" style="left:1897px;top:189.5px;" width="7" height="11" viewBox="0 0 7 11"><path d="M1.5 0.5H5.5M2 0.5V5.5M5 0.5V5.5M0.3 5.5H6.7M3.5 5.5V10.5" stroke="#b0b0b0" stroke-width="1" fill="none"/><rect x="3.6" y="0.5" width="1.4" height="5" fill="#b0b0b0"/></svg>
<div class="r" style="left:984px;top:214px;width:20px;height:20px;background:#cfe6fa;border:1px solid #8cc4f0;border-radius:2px;"></div>
<svg class="r" style="left:799px;top:216px;" width="16" height="16" viewBox="0 0 16 16"><circle cx="7.4" cy="6.3" r="5.3" fill="none" stroke="#2f86cd" stroke-width="1.3"/><path d="M11.2 10.2L14.8 15" stroke="#2f86cd" stroke-width="2" fill="none" /><path d="M7.4 2.8V9.8M3.9 6.3H10.9" stroke="#2f86cd" stroke-width="1.2" fill="none" /></svg>
<svg class="r" style="left:822px;top:216px;" width="16" height="16" viewBox="0 0 16 16"><circle cx="7.4" cy="6.3" r="5.3" fill="none" stroke="#2f86cd" stroke-width="1.3"/><path d="M11.2 10.2L14.8 15" stroke="#2f86cd" stroke-width="2" fill="none" /><path d="M3.9 6.3H10.9" stroke="#2f86cd" stroke-width="1.2" fill="none" /></svg>
<svg class="r" style="left:845px;top:216px;" width="16" height="16" viewBox="0 0 16 16"><rect x="0.6" y="6.6" width="8.3" height="7" fill="none" stroke="#2f86cd" stroke-width="1.2" stroke-dasharray="2 1.3"/><circle cx="8.6" cy="6.3" r="5.3" fill="#fafbfe" stroke="#2f86cd" stroke-width="1.3"/><path d="M12.4 10.2L15.4 15" stroke="#2f86cd" stroke-width="2" fill="none" /><path d="M8.6 2.8V9.8M5.1 6.3H12.1" stroke="#2f86cd" stroke-width="1.2" fill="none" /></svg>
<svg class="r" style="left:862px;top:216px;" width="16" height="16" viewBox="0 0 16 16"><path d="M4.5 6.2H11.5L8 10.4Z" fill="#111" /></svg>
<svg class="r" style="left:885px;top:216px;" width="16" height="16" viewBox="0 0 16 16"><rect x="1.1" y="0.7" width="14.6" height="14" fill="none" stroke="#777" stroke-width="1.1" /><path d="M8.4 5.2V10.2M5.9 7.7H10.9" stroke="#777" stroke-width="1.1" fill="none" /><path d="M8.4 1.6L6.2 4.2H10.6Z" fill="#2f86cd" /><path d="M8.4 13.8L6.2 11.2H10.6Z" fill="#2f86cd" /><path d="M2 7.7L4.8 5.5V9.9Z" fill="#2f86cd" /><path d="M14.8 7.7L12 5.5V9.9Z" fill="#2f86cd" /></svg>
<svg class="r" style="left:917px;top:216px;" width="16" height="16" viewBox="0 0 16 16"><rect x="-0.09999999999999998" y="0.8" width="1.1" height="1.1" fill="#555" /><rect x="-0.09999999999999998" y="3.9000000000000004" width="1.1" height="1.1" fill="#555" /><rect x="-0.09999999999999998" y="7.1" width="1.1" height="1.1" fill="#555" /><rect x="-0.09999999999999998" y="10.2" width="1.1" height="1.1" fill="#555" /><rect x="-0.09999999999999998" y="13.0" width="1.1" height="1.1" fill="#555" /><rect x="2.1" y="15.0" width="1.1" height="1.1" fill="#555" /><rect x="4.9" y="15.0" width="1.1" height="1.1" fill="#555" /><rect x="8.0" y="15.0" width="1.1" height="1.1" fill="#555" /><rect x="11.1" y="15.0" width="1.1" height="1.1" fill="#555" /><rect x="13.9" y="15.0" width="1.1" height="1.1" fill="#555" /><path d="M2.3 0V13.4H15" stroke="#777" stroke-width="1.1" fill="none" /><path d="M6.5 0V13M10.5 0V13M12.4 0V13M14.6 0V13" stroke="#2f86cd" stroke-width="1.1" fill="none" /></svg>
<svg class="r" style="left:940px;top:216px;" width="16" height="16" viewBox="0 0 16 16"><rect x="-0.09999999999999998" y="0.8" width="1.1" height="1.1" fill="#555" /><rect x="-0.09999999999999998" y="3.9000000000000004" width="1.1" height="1.1" fill="#555" /><rect x="-0.09999999999999998" y="7.1" width="1.1" height="1.1" fill="#555" /><rect x="-0.09999999999999998" y="10.2" width="1.1" height="1.1" fill="#555" /><rect x="-0.09999999999999998" y="13.0" width="1.1" height="1.1" fill="#555" /><rect x="2.1" y="15.0" width="1.1" height="1.1" fill="#555" /><rect x="4.9" y="15.0" width="1.1" height="1.1" fill="#555" /><rect x="8.0" y="15.0" width="1.1" height="1.1" fill="#555" /><rect x="11.1" y="15.0" width="1.1" height="1.1" fill="#555" /><rect x="13.9" y="15.0" width="1.1" height="1.1" fill="#555" /><path d="M2.4 0V13.4H16" stroke="#777" stroke-width="1.1" fill="none" /><path d="M2.9 1.5H16.1M2.9 3.6H16.1M2.9 6.5H16.1M2.9 10.5H16.1" stroke="#2f86cd" stroke-width="1.1" fill="none" /></svg>
<svg class="r" style="left:962px;top:216px;" width="16" height="16" viewBox="0 0 16 16"><rect x="16.0" y="0.8" width="1.1" height="1.1" fill="#555" /><rect x="16.0" y="3.9000000000000004" width="1.1" height="1.1" fill="#555" /><rect x="16.0" y="7.1" width="1.1" height="1.1" fill="#555" /><rect x="16.0" y="10.2" width="1.1" height="1.1" fill="#555" /><rect x="16.0" y="13.0" width="1.1" height="1.1" fill="#555" /><rect x="1.5" y="15.0" width="1.1" height="1.1" fill="#555" /><rect x="4.5" y="15.0" width="1.1" height="1.1" fill="#555" /><rect x="7.5" y="15.0" width="1.1" height="1.1" fill="#555" /><rect x="10.5" y="15.0" width="1.1" height="1.1" fill="#555" /><rect x="13.5" y="15.0" width="1.1" height="1.1" fill="#555" /><path d="M14.6 0V13.4H1" stroke="#777" stroke-width="1.1" fill="none" /><path d="M1 1.5H14.2M1 4.4H14.2M1 8.5H14.2M1 11.3H14.2" stroke="#2f86cd" stroke-width="1.1" fill="none" /></svg>
<svg class="r" style="left:986px;top:216px;" width="16" height="16" viewBox="0 0 16 16"><path d="M1.5 0.8H14.4V10H11L10.4 14.2L6.8 10H1.5Z" stroke="#777" stroke-width="1.2" fill="#fff" stroke-linejoin="round"/><path d="M4.8 3.5H10.8M4.8 5.5H10.8M4.8 7.5H10.8" stroke="#2f86cd" stroke-width="1.1" fill="none" /></svg>
<svg class="r" style="left:1016px;top:216px;" width="16" height="16" viewBox="0 0 16 16"><path d="M7.5 0.6C13 -0.5 17 3.5 15.8 8.5C14.6 13 9.5 16 5 15.5C1.5 15 1 12 3 10.5C5.5 8.8 3 6.5 4 3.5C4.6 1.8 6 0.9 7.5 0.6Z" fill="#e4e4e4" stroke="#8a8a8a" stroke-width="1.1"/><circle cx="6.8" cy="4.6" r="1.6" fill="#fff" stroke="#8a8a8a" stroke-width="1"/><circle cx="11.3" cy="3.6" r="1.3" fill="#8cc8f0"/><circle cx="12.2" cy="7" r="1.4" fill="#2f86cd"/><circle cx="10.6" cy="9.8" r="1.4" fill="#f5a030"/><circle cx="8.2" cy="11.4" r="1.4" fill="#f06a20"/><circle cx="5.4" cy="12.4" r="1.5" fill="#e0206a"/></svg>
<svg class="r" style="left:1034px;top:216px;" width="16" height="16" viewBox="0 0 16 16"><path d="M4.5 6.2H11.5L8 10.4Z" fill="#111" /></svg>
<svg class="r" style="left:1064px;top:216px;" width="16" height="16" viewBox="0 0 16 16"><circle cx="9" cy="8" r="6.9" fill="#2f86cd"/><path d="M11.95 8.52L9.64 15.37" stroke="#fafbfe" stroke-width="0.9" fill="none" /><path d="M10.03 10.82L2.94 12.24" stroke="#fafbfe" stroke-width="0.9" fill="none" /><path d="M7.07 10.30L2.29 4.87" stroke="#fafbfe" stroke-width="0.9" fill="none" /><path d="M6.05 7.48L8.36 0.63" stroke="#fafbfe" stroke-width="0.9" fill="none" /><path d="M7.97 5.18L15.06 3.76" stroke="#fafbfe" stroke-width="0.9" fill="none" /><path d="M10.93 5.70L15.71 11.13" stroke="#fafbfe" stroke-width="0.9" fill="none" /><circle cx="9" cy="8" r="3.0" fill="#fafbfe"/></svg>
<svg class="r" style="left:1082px;top:216px;" width="16" height="16" viewBox="0 0 16 16"><path d="M4.5 6.2H11.5L8 10.4Z" fill="#111" /></svg>
<svg class="r" style="left:1105px;top:216px;" width="16" height="16" viewBox="0 0 16 16"><path d="M1 4.2H5L6 2.2H11.4L12.4 4.2H17.1V13.9H1Z" fill="#2f86cd" /><circle cx="9.8" cy="8.8" r="3.3" fill="#2f86cd" stroke="#fff" stroke-width="1.1"/><rect x="2.2" y="5.4" width="1.6" height="1.4" fill="#fff" /></svg>
<svg class="r" style="left:1129px;top:216px;" width="16" height="16" viewBox="0 0 16 16"><rect x="3.5" y="0.8" width="9.2" height="4" fill="#fff" stroke="#2f86cd" stroke-width="1.2" /><rect x="1.6" y="4.4" width="13" height="7.4" fill="#b9d0ea" stroke="#2f86cd" stroke-width="1.2" rx="1.2" /><rect x="3.5" y="10.2" width="9.2" height="5.2" fill="#fff" stroke="#2f86cd" stroke-width="1.2" /><rect x="11.2" y="6" width="1.8" height="0.9" fill="#2f86cd" /></svg>
<div class="r" style="left:909px;top:216px;width:1px;height:16px;background:#c4c4c4;"></div>
<div class="r" style="left:1009px;top:216px;width:1px;height:16px;background:#c4c4c4;"></div>
<div class="r" style="left:1057px;top:216px;width:1px;height:16px;background:#c4c4c4;"></div>
<div class="r" style="left:792px;top:237px;width:1121px;height:446px;background:#fff;"></div>
<svg class="r" style="left:1890px;top:243.5px;" width="16" height="16" viewBox="0 0 16 16"><rect x="0.2" y="1.9" width="15.6" height="12.2" fill="#ececf0" rx="3.5" opacity="0.8"/><rect x="1" y="2.7" width="14" height="10.6" fill="#142a9c" rx="2.6" /><path d="M3.4 2.7H2.8Q1 3 1 5.3V10.7Q1 13 2.8 13.3H3.4Z" fill="#4f86e8" /><rect x="3.8" y="4.7" width="10.4" height="6.6" fill="#35a6f2" rx="0.8" /><path d="M3.8 4.7H5.5L10 8.2L8.6 11.3H3.8Z" fill="#f6e64c" /><path d="M6.2 4.7H14.2V8H10.2Z" fill="#1a37ad" /><path d="M5.5 4.7L10 8.2L9.4 9.6L4.6 5Z" fill="#a8e08a" opacity="0.7"/></svg>
<svg class="r" style="left:793px;top:236px;" width="1119" height="447" viewBox="0 0 1119 447"><line x1="81.0" y1="47" x2="81.0" y2="407" stroke="#e4e4e4" stroke-width="1.6"/><line x1="169.1" y1="47" x2="169.1" y2="407" stroke="#e4e4e4" stroke-width="1.6"/><line x1="257.2" y1="47" x2="257.2" y2="407" stroke="#e4e4e4" stroke-width="1.6"/><line x1="345.3" y1="47" x2="345.3" y2="407" stroke="#e4e4e4" stroke-width="1.6"/><line x1="433.4" y1="47" x2="433.4" y2="407" stroke="#e4e4e4" stroke-width="1.6"/><line x1="521.5" y1="47" x2="521.5" y2="407" stroke="#e4e4e4" stroke-width="1.6"/><line x1="609.6" y1="47" x2="609.6" y2="407" stroke="#e4e4e4" stroke-width="1.6"/><line x1="697.7" y1="47" x2="697.7" y2="407" stroke="#e4e4e4" stroke-width="1.6"/><line x1="785.8" y1="47" x2="785.8" y2="407" stroke="#e4e4e4" stroke-width="1.6"/><line x1="873.9" y1="47" x2="873.9" y2="407" stroke="#e4e4e4" stroke-width="1.6"/><line x1="962.0" y1="47" x2="962.0" y2="407" stroke="#e4e4e4" stroke-width="1.6"/><line x1="71" y1="397.0" x2="1042" y2="397.0" stroke="#e4e4e4" stroke-width="1.6"/><line x1="71" y1="377.0" x2="1042" y2="377.0" stroke="#e4e4e4" stroke-width="1.6"/><line x1="71" y1="357.0" x2="1042" y2="357.0" stroke="#e4e4e4" stroke-width="1.6"/><line x1="71" y1="337.0" x2="1042" y2="337.0" stroke="#e4e4e4" stroke-width="1.6"/><line x1="71" y1="317.0" x2="1042" y2="317.0" stroke="#e4e4e4" stroke-width="1.6"/><line x1="71" y1="297.0" x2="1042" y2="297.0" stroke="#e4e4e4" stroke-width="1.6"/><line x1="71" y1="277.0" x2="1042" y2="277.0" stroke="#e4e4e4" stroke-width="1.6"/><line x1="71" y1="257.0" x2="1042" y2="257.0" stroke="#e4e4e4" stroke-width="1.6"/><line x1="71" y1="237.0" x2="1042" y2="237.0" stroke="#e4e4e4" stroke-width="1.6"/><line x1="71" y1="217.0" x2="1042" y2="217.0" stroke="#e4e4e4" stroke-width="1.6"/><line x1="71" y1="197.0" x2="1042" y2="197.0" stroke="#e4e4e4" stroke-width="1.6"/><line x1="71" y1="177.0" x2="1042" y2="177.0" stroke="#e4e4e4" stroke-width="1.6"/><line x1="71" y1="157.0" x2="1042" y2="157.0" stroke="#e4e4e4" stroke-width="1.6"/><line x1="71" y1="137.0" x2="1042" y2="137.0" stroke="#e4e4e4" stroke-width="1.6"/><line x1="71" y1="117.0" x2="1042" y2="117.0" stroke="#e4e4e4" stroke-width="1.6"/><line x1="71" y1="97.0" x2="1042" y2="97.0" stroke="#e4e4e4" stroke-width="1.6"/><line x1="71" y1="77.0" x2="1042" y2="77.0" stroke="#e4e4e4" stroke-width="1.6"/><line x1="71" y1="57.0" x2="1042" y2="57.0" stroke="#e4e4e4" stroke-width="1.6"/><line x1="81.0" y1="357.0" x2="1032" y2="357.0" stroke="#7088f8" stroke-width="1.6" stroke-dasharray="18.3 5.5"/><line x1="81.0" y1="395" x2="1032" y2="395" stroke="#55c86c" stroke-width="1.3" stroke-dasharray="18.3 5.5"/><path d="M81.2 57.2C83.2 58.1 88.7 60.4 93.2 62.7C97.7 65.0 103.4 68.0 108.0 71.1C112.6 74.2 116.7 77.6 121.0 81.3C125.3 85.0 130.0 89.3 134.0 93.3C138.0 97.3 141.4 101.0 145.1 105.3C148.8 109.6 152.2 113.8 156.2 119.2C160.2 124.6 164.8 131.5 169.1 137.7C173.4 143.9 177.5 149.8 182.1 156.3C186.7 162.8 192.0 170.1 196.9 176.6C201.8 183.1 206.8 189.3 211.7 195.1C216.7 200.9 221.7 206.3 226.6 211.5C231.6 216.7 236.5 221.6 241.4 226.2C246.3 230.8 251.8 235.5 256.2 239.3C260.6 243.1 264.0 246.0 268.0 249.2C272.0 252.4 275.5 255.1 280.3 258.6C285.1 262.2 291.4 266.8 297.0 270.5C302.6 274.2 308.2 277.6 313.7 280.7C319.3 283.8 325.0 286.5 330.3 289.0C335.6 291.5 339.7 293.3 345.3 295.7C350.9 298.2 357.9 301.2 363.7 303.7C369.5 306.2 374.7 308.3 380.3 310.7C385.8 313.1 391.4 315.8 397.0 318.2C402.6 320.6 408.2 322.9 413.7 325.3C419.3 327.6 424.7 329.9 430.3 332.3C435.8 334.7 441.4 337.5 447.0 339.6C452.6 341.7 458.2 343.4 463.7 344.8C469.3 346.2 475.3 347.5 480.3 348.2C485.3 348.9 489.3 349.1 493.7 349.0C498.2 348.9 503.1 348.3 507.0 347.8C510.9 347.3 513.7 346.7 517.0 346.0C520.3 345.3 525.3 344.1 527.0 343.7" fill="none" stroke="#2a48f0" stroke-width="1.2"/><polyline points="82.0,395.2 133.0,395.2 142.8,393.3 149.0,389.5 157.0,383.3 169.0,374.5 182.0,368.3 195.0,363.6 207.0,360.0 218.6,357.0 233.0,354.3 247.0,351.5 263.7,347.3 280.3,343.5 297.0,341.2 313.7,339.0 327.0,335.3 337.0,331.5 345.3,327.7 353.7,322.0 363.7,315.7 372.0,311.5 380.3,308.2 390.3,305.3 400.3,303.2 410.3,301.7 417.8,301.3 428.7,304.8 440.3,314.0 452.0,324.0 461.2,328.5 472.0,327.3 482.8,315.7 493.7,294.8 498.7,277.3 503.7,256.0 508.5,224.8 513.1,198.9 516.3,173.0 519.2,143.3 522.4,111.8 525.5,76.6 527.6,59.0" fill="none" stroke="#2db84a" stroke-width="1.2" stroke-linejoin="round"/><rect x="71" y="47" width="971" height="360" fill="none" stroke="#646464" stroke-width="2"/><line x1="81.0" y1="47" x2="81.0" y2="52" stroke="#646464" stroke-width="1.5"/><line x1="81.0" y1="407" x2="81.0" y2="402" stroke="#646464" stroke-width="1.5"/><line x1="169.1" y1="47" x2="169.1" y2="52" stroke="#646464" stroke-width="1.5"/><line x1="169.1" y1="407" x2="169.1" y2="402" stroke="#646464" stroke-width="1.5"/><line x1="257.2" y1="47" x2="257.2" y2="52" stroke="#646464" stroke-width="1.5"/><line x1="257.2" y1="407" x2="257.2" y2="402" stroke="#646464" stroke-width="1.5"/><line x1="345.3" y1="47" x2="345.3" y2="52" stroke="#646464" stroke-width="1.5"/><line x1="345.3" y1="407" x2="345.3" y2="402" stroke="#646464" stroke-width="1.5"/><line x1="433.4" y1="47" x2="433.4" y2="52" stroke="#646464" stroke-width="1.5"/><line x1="433.4" y1="407" x2="433.4" y2="402" stroke="#646464" stroke-width="1.5"/><line x1="521.5" y1="47" x2="521.5" y2="52" stroke="#646464" stroke-width="1.5"/><line x1="521.5" y1="407" x2="521.5" y2="402" stroke="#646464" stroke-width="1.5"/><line x1="609.6" y1="47" x2="609.6" y2="52" stroke="#646464" stroke-width="1.5"/><line x1="609.6" y1="407" x2="609.6" y2="402" stroke="#646464" stroke-width="1.5"/><line x1="697.7" y1="47" x2="697.7" y2="52" stroke="#646464" stroke-width="1.5"/><line x1="697.7" y1="407" x2="697.7" y2="402" stroke="#646464" stroke-width="1.5"/><line x1="785.8" y1="47" x2="785.8" y2="52" stroke="#646464" stroke-width="1.5"/><line x1="785.8" y1="407" x2="785.8" y2="402" stroke="#646464" stroke-width="1.5"/><line x1="873.9" y1="47" x2="873.9" y2="52" stroke="#646464" stroke-width="1.5"/><line x1="873.9" y1="407" x2="873.9" y2="402" stroke="#646464" stroke-width="1.5"/><line x1="962.0" y1="47" x2="962.0" y2="52" stroke="#646464" stroke-width="1.5"/><line x1="962.0" y1="407" x2="962.0" y2="402" stroke="#646464" stroke-width="1.5"/><line x1="71" y1="397.0" x2="76" y2="397.0" stroke="#646464" stroke-width="1.5"/><line x1="71" y1="377.0" x2="76" y2="377.0" stroke="#646464" stroke-width="1.5"/><line x1="71" y1="357.0" x2="76" y2="357.0" stroke="#646464" stroke-width="1.5"/><line x1="71" y1="337.0" x2="76" y2="337.0" stroke="#646464" stroke-width="1.5"/><line x1="71" y1="317.0" x2="76" y2="317.0" stroke="#646464" stroke-width="1.5"/><line x1="71" y1="297.0" x2="76" y2="297.0" stroke="#646464" stroke-width="1.5"/><line x1="71" y1="277.0" x2="76" y2="277.0" stroke="#646464" stroke-width="1.5"/><line x1="71" y1="257.0" x2="76" y2="257.0" stroke="#646464" stroke-width="1.5"/><line x1="71" y1="237.0" x2="76" y2="237.0" stroke="#646464" stroke-width="1.5"/><line x1="71" y1="217.0" x2="76" y2="217.0" stroke="#646464" stroke-width="1.5"/><line x1="71" y1="197.0" x2="76" y2="197.0" stroke="#646464" stroke-width="1.5"/><line x1="71" y1="177.0" x2="76" y2="177.0" stroke="#646464" stroke-width="1.5"/><line x1="71" y1="157.0" x2="76" y2="157.0" stroke="#646464" stroke-width="1.5"/><line x1="71" y1="137.0" x2="76" y2="137.0" stroke="#646464" stroke-width="1.5"/><line x1="71" y1="117.0" x2="76" y2="117.0" stroke="#646464" stroke-width="1.5"/><line x1="71" y1="97.0" x2="76" y2="97.0" stroke="#646464" stroke-width="1.5"/><line x1="71" y1="77.0" x2="76" y2="77.0" stroke="#646464" stroke-width="1.5"/><line x1="71" y1="57.0" x2="76" y2="57.0" stroke="#646464" stroke-width="1.5"/><line x1="1042" y1="395.0" x2="1036" y2="395.0" stroke="#646464" stroke-width="1.5"/><line x1="1042" y1="374.8" x2="1036" y2="374.8" stroke="#646464" stroke-width="1.5"/><line x1="1042" y1="354.6" x2="1036" y2="354.6" stroke="#646464" stroke-width="1.5"/><line x1="1042" y1="334.5" x2="1036" y2="334.5" stroke="#646464" stroke-width="1.5"/><line x1="1042" y1="314.3" x2="1036" y2="314.3" stroke="#646464" stroke-width="1.5"/><line x1="1042" y1="294.1" x2="1036" y2="294.1" stroke="#646464" stroke-width="1.5"/><line x1="1042" y1="273.9" x2="1036" y2="273.9" stroke="#646464" stroke-width="1.5"/><line x1="1042" y1="253.8" x2="1036" y2="253.8" stroke="#646464" stroke-width="1.5"/><line x1="1042" y1="233.6" x2="1036" y2="233.6" stroke="#646464" stroke-width="1.5"/><line x1="1042" y1="213.4" x2="1036" y2="213.4" stroke="#646464" stroke-width="1.5"/><line x1="1042" y1="193.2" x2="1036" y2="193.2" stroke="#646464" stroke-width="1.5"/><line x1="1042" y1="173.1" x2="1036" y2="173.1" stroke="#646464" stroke-width="1.5"/><line x1="1042" y1="152.9" x2="1036" y2="152.9" stroke="#646464" stroke-width="1.5"/><line x1="1042" y1="132.7" x2="1036" y2="132.7" stroke="#646464" stroke-width="1.5"/><line x1="1042" y1="112.5" x2="1036" y2="112.5" stroke="#646464" stroke-width="1.5"/><line x1="1042" y1="92.4" x2="1036" y2="92.4" stroke="#646464" stroke-width="1.5"/><line x1="1042" y1="72.2" x2="1036" y2="72.2" stroke="#646464" stroke-width="1.5"/><line x1="1042" y1="52.0" x2="1036" y2="52.0" stroke="#646464" stroke-width="1.5"/><rect x="801.5" y="64" width="223" height="154" fill="#808080"/><rect x="805.5" y="60.5" width="223" height="154" fill="#fff" stroke="#000" stroke-width="1"/><path d="M818 74.5H858" stroke="#000" stroke-width="1.4"/><path d="M813 74.5l6 -4v8z" fill="#000"/><path d="M975 155.5H1015" stroke="#000" stroke-width="1.4"/><path d="M1020 155.5l-6 -4v8z" fill="#000"/><path d="M815 137.5H1018" stroke="#222" stroke-width="1" stroke-dasharray="2 2.5"/><path d="M814 94.5H840" stroke="#2a48f0" stroke-width="1.2"/><path d="M814 117.5H840" stroke="#2a48f0" stroke-width="1.2" stroke-dasharray="10 6"/><path d="M814 175.5H840" stroke="#2db84a" stroke-width="1.2"/><path d="M814 198.5H840" stroke="#2db84a" stroke-width="1.2" stroke-dasharray="10 6"/></svg>
<div class="t" style="left:1349.5px;top:250.0px;font-size:13px;line-height:16px;color:#111;letter-spacing:0.601px;transform:translateX(-50%);will-change:transform;">constr = 1.0007</div>
<div class="t" style="left:1349.5px;top:664.5px;font-size:13px;line-height:16px;color:#111;letter-spacing:0.438px;transform:translateX(-50%);will-change:transform;">Time (min)</div>
<div class="t" style="left:875.0px;top:648.5px;font-size:13px;line-height:16px;color:#111;letter-spacing:0.670px;transform:translateX(-50%);will-change:transform;">0</div>
<div class="t" style="left:963.1px;top:648.5px;font-size:13px;line-height:16px;color:#111;letter-spacing:0.670px;transform:translateX(-50%);will-change:transform;">5</div>
<div class="t" style="left:1051.2px;top:648.5px;font-size:13px;line-height:16px;color:#111;letter-spacing:0.670px;transform:translateX(-50%);will-change:transform;">10</div>
<div class="t" style="left:1139.3px;top:648.5px;font-size:13px;line-height:16px;color:#111;letter-spacing:0.670px;transform:translateX(-50%);will-change:transform;">15</div>
<div class="t" style="left:1227.4px;top:648.5px;font-size:13px;line-height:16px;color:#111;letter-spacing:0.670px;transform:translateX(-50%);will-change:transform;">20</div>
<div class="t" style="left:1315.5px;top:648.5px;font-size:13px;line-height:16px;color:#111;letter-spacing:0.670px;transform:translateX(-50%);will-change:transform;">25</div>
<div class="t" style="left:1403.6px;top:648.5px;font-size:13px;line-height:16px;color:#111;letter-spacing:0.670px;transform:translateX(-50%);will-change:transform;">30</div>
<div class="t" style="left:1491.7px;top:648.5px;font-size:13px;line-height:16px;color:#111;letter-spacing:0.670px;transform:translateX(-50%);will-change:transform;">35</div>
<div class="t" style="left:1579.8000000000002px;top:648.5px;font-size:13px;line-height:16px;color:#111;letter-spacing:0.670px;transform:translateX(-50%);will-change:transform;">40</div>
<div class="t" style="left:1667.9px;top:648.5px;font-size:13px;line-height:16px;color:#111;letter-spacing:0.670px;transform:translateX(-50%);will-change:transform;">45</div>
<div class="t" style="left:1756.0px;top:648.5px;font-size:13px;line-height:16px;color:#111;letter-spacing:0.670px;transform:translateX(-50%);will-change:transform;">50</div>
<div class="t" style="left:860px;top:625.0px;font-size:13px;line-height:16px;color:#111;letter-spacing:0.609px;transform:translateX(-100%);will-change:transform;">0.6</div>
<div class="t" style="left:860px;top:605.0px;font-size:13px;line-height:16px;color:#111;letter-spacing:0.609px;transform:translateX(-100%);will-change:transform;">0.8</div>
<div class="t" style="left:860px;top:585.0px;font-size:13px;line-height:16px;color:#111;letter-spacing:0.670px;transform:translateX(-100%);will-change:transform;">1</div>
<div class="t" style="left:860px;top:565.0px;font-size:13px;line-height:16px;color:#111;letter-spacing:0.609px;transform:translateX(-100%);will-change:transform;">1.2</div>
<div class="t" style="left:860px;top:545.0px;font-size:13px;line-height:16px;color:#111;letter-spacing:0.609px;transform:translateX(-100%);will-change:transform;">1.4</div>
<div class="t" style="left:860px;top:525.0px;font-size:13px;line-height:16px;color:#111;letter-spacing:0.609px;transform:translateX(-100%);will-change:transform;">1.6</div>
<div class="t" style="left:860px;top:505.0px;font-size:13px;line-height:16px;color:#111;letter-spacing:0.609px;transform:translateX(-100%);will-change:transform;">1.8</div>
<div class="t" style="left:860px;top:485.0px;font-size:13px;line-height:16px;color:#111;letter-spacing:0.670px;transform:translateX(-100%);will-change:transform;">2</div>
<div class="t" style="left:860px;top:465.0px;font-size:13px;line-height:16px;color:#111;letter-spacing:0.609px;transform:translateX(-100%);will-change:transform;">2.2</div>
<div class="t" style="left:860px;top:445.0px;font-size:13px;line-height:16px;color:#111;letter-spacing:0.609px;transform:translateX(-100%);will-change:transform;">2.4</div>
<div class="t" style="left:860px;top:425.0px;font-size:13px;line-height:16px;color:#111;letter-spacing:0.609px;transform:translateX(-100%);will-change:transform;">2.6</div>
<div class="t" style="left:860px;top:405.0px;font-size:13px;line-height:16px;color:#111;letter-spacing:0.609px;transform:translateX(-100%);will-change:transform;">2.8</div>
<div class="t" style="left:860px;top:385.0px;font-size:13px;line-height:16px;color:#111;letter-spacing:0.670px;transform:translateX(-100%);will-change:transform;">3</div>
<div class="t" style="left:860px;top:365.0px;font-size:13px;line-height:16px;color:#111;letter-spacing:0.609px;transform:translateX(-100%);will-change:transform;">3.2</div>
<div class="t" style="left:860px;top:345.0px;font-size:13px;line-height:16px;color:#111;letter-spacing:0.609px;transform:translateX(-100%);will-change:transform;">3.4</div>
<div class="t" style="left:860px;top:325.0px;font-size:13px;line-height:16px;color:#111;letter-spacing:0.609px;transform:translateX(-100%);will-change:transform;">3.6</div>
<div class="t" style="left:860px;top:305.0px;font-size:13px;line-height:16px;color:#111;letter-spacing:0.609px;transform:translateX(-100%);will-change:transform;">3.8</div>
<div class="t" style="left:860px;top:285.0px;font-size:13px;line-height:16px;color:#111;letter-spacing:0.670px;transform:translateX(-100%);will-change:transform;">4</div>
<div class="t" style="left:1840px;top:622.7px;font-size:13px;line-height:16px;color:#111;letter-spacing:0.670px;will-change:transform;">0</div>
<div class="t" style="left:1840px;top:602.5px;font-size:13px;line-height:16px;color:#111;letter-spacing:0.639px;will-change:transform;">0.0002</div>
<div class="t" style="left:1840px;top:582.3px;font-size:13px;line-height:16px;color:#111;letter-spacing:0.639px;will-change:transform;">0.0004</div>
<div class="t" style="left:1840px;top:562.2px;font-size:13px;line-height:16px;color:#111;letter-spacing:0.639px;will-change:transform;">0.0006</div>
<div class="t" style="left:1840px;top:542.0px;font-size:13px;line-height:16px;color:#111;letter-spacing:0.639px;will-change:transform;">0.0008</div>
<div class="t" style="left:1840px;top:521.8px;font-size:13px;line-height:16px;color:#111;letter-spacing:0.633px;will-change:transform;">0.001</div>
<div class="t" style="left:1840px;top:501.6px;font-size:13px;line-height:16px;color:#111;letter-spacing:0.639px;will-change:transform;">0.0012</div>
<div class="t" style="left:1840px;top:481.5px;font-size:13px;line-height:16px;color:#111;letter-spacing:0.639px;will-change:transform;">0.0014</div>
<div class="t" style="left:1840px;top:461.3px;font-size:13px;line-height:16px;color:#111;letter-spacing:0.639px;will-change:transform;">0.0016</div>
<div class="t" style="left:1840px;top:441.1px;font-size:13px;line-height:16px;color:#111;letter-spacing:0.639px;will-change:transform;">0.0018</div>
<div class="t" style="left:1840px;top:420.9px;font-size:13px;line-height:16px;color:#111;letter-spacing:0.633px;will-change:transform;">0.002</div>
<div class="t" style="left:1840px;top:400.8px;font-size:13px;line-height:16px;color:#111;letter-spacing:0.639px;will-change:transform;">0.0022</div>
<div class="t" style="left:1840px;top:380.6px;font-size:13px;line-height:16px;color:#111;letter-spacing:0.639px;will-change:transform;">0.0024</div>
<div class="t" style="left:1840px;top:360.4px;font-size:13px;line-height:16px;color:#111;letter-spacing:0.639px;will-change:transform;">0.0026</div>
<div class="t" style="left:1840px;top:340.2px;font-size:13px;line-height:16px;color:#111;letter-spacing:0.639px;will-change:transform;">0.0028</div>
<div class="t" style="left:1840px;top:320.1px;font-size:13px;line-height:16px;color:#111;letter-spacing:0.633px;will-change:transform;">0.003</div>
<div class="t" style="left:1840px;top:299.9px;font-size:13px;line-height:16px;color:#111;letter-spacing:0.639px;will-change:transform;">0.0032</div>
<div class="t" style="left:1840px;top:279.7px;font-size:13px;line-height:16px;color:#111;letter-spacing:0.639px;will-change:transform;">0.0034</div>
<div class="t" style="left:800.5px;top:454.0px;font-size:13px;line-height:16px;color:#111;letter-spacing:0.210px;transform:translateX(-50%);will-change:transform;transform:translate(-50%,0) rotate(-90deg);">C rate (1)</div>
<div class="t" style="left:1898.5px;top:454.0px;font-size:13px;line-height:16px;color:#111;letter-spacing:0.286px;transform:translateX(-50%);will-change:transform;transform:translate(-50%,0) rotate(-90deg);">Parasitic aging current (A)</div>
<div class="t" style="left:1639px;top:326.0px;font-size:13px;line-height:16px;color:#111;letter-spacing:0.289px;will-change:transform;">Control Function</div>
<div class="t" style="left:1638px;top:349.0px;font-size:13px;line-height:16px;color:#111;letter-spacing:0.319px;will-change:transform;">Initial Control Function</div>
<div class="t" style="left:1638px;top:404.0px;font-size:13px;line-height:16px;color:#111;letter-spacing:0.333px;will-change:transform;">Parasitic aging current</div>
<div class="t" style="left:1638px;top:427.0px;font-size:13px;line-height:16px;color:#111;letter-spacing:0.392px;will-change:transform;">Initial parasitic aging current</div>
<div class="p" style="left:792px;top:691px;width:1121px;height:355px;"></div>
<svg class="r" style="left:1860px;top:706.2px;" width="9" height="6" viewBox="0 0 9 6"><path d="M0.7 0.8L4.5 4.6L8.3 0.8" stroke="#b0b0b0" stroke-width="1.1" fill="none"/></svg>
<svg class="r" style="left:1879px;top:704px;" width="9" height="9" viewBox="0 0 9 9"><path d="M0.5 0.5H8.5V8.5H0.5Z M0.5 2H8.5" stroke="#b0b0b0" stroke-width="1" fill="none"/><rect x="0.5" y="0.5" width="8" height="2" fill="#b0b0b0"/></svg>
<svg class="r" style="left:1897px;top:702.5px;" width="7" height="11" viewBox="0 0 7 11"><path d="M1.5 0.5H5.5M2 0.5V5.5M5 0.5V5.5M0.3 5.5H6.7M3.5 5.5V10.5" stroke="#b0b0b0" stroke-width="1" fill="none"/><rect x="3.6" y="0.5" width="1.4" height="5" fill="#b0b0b0"/></svg>
<div class="t" style="left:805px;top:701.0px;font-size:13px;line-height:16px;color:#444;letter-spacing:-0.156px;">Messages</div>
<div class="t" style="left:912px;top:701.0px;font-size:13px;line-height:16px;color:#444;letter-spacing:-0.002px;">Progress</div>
<div class="t" style="left:990px;top:701.0px;font-size:13px;line-height:16px;color:#444;letter-spacing:0.103px;">Log</div>
<div class="t" style="left:1038px;top:701.0px;font-size:13px;line-height:16px;color:#2f5fae;letter-spacing:0.052px;">Objective Probe Table 2</div>
<svg class="r" style="left:872px;top:704px;" width="10" height="10" viewBox="0 0 10 10"><path d="M0.3 0.3L9.7 9.7M9.7 0.3L0.3 9.7" stroke="#999" stroke-width="1.1" fill="none"/></svg>
<svg class="r" style="left:1185px;top:704px;" width="10" height="10" viewBox="0 0 10 10"><path d="M0.3 0.3L9.7 9.7M9.7 0.3L0.3 9.7" stroke="#999" stroke-width="1.1" fill="none"/></svg>
<div class="r" style="left:792px;top:723px;width:1121px;height:1px;background:#e3e4e8;"></div>
<div class="r" style="left:1033px;top:722px;width:171px;height:2px;background:#2f86cd;"></div>
<div class="r" style="left:851px;top:727px;width:20px;height:20px;background:#cfe6fa;border:1px solid #8cc4f0;border-radius:2px;"></div>
<div class="r" style="left:951px;top:727px;width:20px;height:20px;background:#cfe6fa;border:1px solid #8cc4f0;border-radius:2px;"></div>
<svg class="r" style="left:798px;top:729px;" width="16" height="16" viewBox="0 0 16 16"><path d="M5.5 2.5H16M5.5 6.5H16M5.5 10.5H16M5.5 14.5H16" stroke="#2f86cd" stroke-width="1.1" fill="none" /><text x="1" y="4.2" font-family="Liberation Sans" font-size="4.5" fill="#2f86cd" >1</text><text x="1" y="8.2" font-family="Liberation Sans" font-size="4.5" fill="#2f86cd" >2</text><text x="1" y="12.2" font-family="Liberation Sans" font-size="4.5" fill="#2f86cd" >3</text><text x="1" y="16.2" font-family="Liberation Sans" font-size="4.5" fill="#2f86cd" >4</text></svg>
<svg class="r" style="left:829px;top:729px;" width="16" height="16" viewBox="0 0 16 16"><text x="-0.6" y="7" font-family="Liberation Sans" font-size="9" fill="#2f86cd" stroke="#2f86cd" stroke-width="0.3" textLength="17" lengthAdjust="spacingAndGlyphs">8.85</text><text x="-0.4" y="15" font-family="Liberation Sans" font-size="9" fill="#2f86cd" stroke="#2f86cd" stroke-width="0.3" textLength="16.6" lengthAdjust="spacingAndGlyphs">e-12</text></svg>
<svg class="r" style="left:853px;top:729px;" width="16" height="16" viewBox="0 0 16 16"><text x="0.2" y="10.6" font-family="Liberation Sans" font-size="7.2" fill="#2f86cd" stroke="#2f86cd" stroke-width="0.3" font-weight="bold" textLength="15.8" lengthAdjust="spacingAndGlyphs">AUTO</text></svg>
<svg class="r" style="left:875px;top:729px;" width="16" height="16" viewBox="0 0 16 16"><text x="2.4" y="7" font-family="Liberation Sans" font-size="9" fill="#2f86cd" stroke="#2f86cd" stroke-width="0.3" textLength="12" lengthAdjust="spacingAndGlyphs">8.5</text><text x="2.6" y="15" font-family="Liberation Sans" font-size="9" fill="#2f86cd" stroke="#2f86cd" stroke-width="0.3" textLength="11.2" lengthAdjust="spacingAndGlyphs">e-1</text></svg>
<svg class="r" style="left:898px;top:729px;" width="16" height="16" viewBox="0 0 16 16"><text x="1.3" y="7" font-family="Liberation Sans" font-size="9" fill="#2f86cd" stroke="#2f86cd" stroke-width="0.3" textLength="15" lengthAdjust="spacingAndGlyphs">850</text><text x="1.5" y="15" font-family="Liberation Sans" font-size="9" fill="#2f86cd" stroke="#2f86cd" stroke-width="0.3" textLength="13" lengthAdjust="spacingAndGlyphs">e-3</text></svg>
<svg class="r" style="left:922px;top:729px;" width="16" height="16" viewBox="0 0 16 16"><text x="-0.4" y="11" font-family="Liberation Sans" font-size="9" fill="#2f86cd" stroke="#2f86cd" stroke-width="0.3" textLength="16.8" lengthAdjust="spacingAndGlyphs">0.85</text></svg>
<svg class="r" style="left:953px;top:729px;" width="16" height="16" viewBox="0 0 16 16"><rect x="0.8" y="3.4" width="15.6" height="8.6" fill="#e8f3fc" stroke="#2f86cd" stroke-width="1.2" /><rect x="0.8" y="3.4" width="15.6" height="2.2" fill="#2f86cd" /><path d="M0.8 8.6H16.4M3.9 3.4V12M7 3.4V12M10.1 3.4V12M13.2 3.4V12" stroke="#2f86cd" stroke-width="1" fill="none" /></svg>
<svg class="r" style="left:976px;top:729px;" width="16" height="16" viewBox="0 0 16 16"><circle cx="7.5" cy="7.3" r="7.1" fill="none" stroke="#2f86cd" stroke-width="1.1"/><circle cx="7.5" cy="7.3" r="4.7" fill="none" stroke="#2f86cd" stroke-width="0.7"/><circle cx="7.5" cy="7.3" r="2.4" fill="none" stroke="#2f86cd" stroke-width="0.7"/><path d="M0.4 7.3H14.6M7.5 0.2V14.4M2.5 2.3L12.5 12.3M12.5 2.3L2.5 12.3M1 4.5L14 10.1M14 4.5L1 10.1M4.7 0.8L10.3 13.8M10.3 0.8L4.7 13.8" stroke="#2f86cd" stroke-width="0.5" fill="none" /></svg>
<svg class="r" style="left:1006px;top:729px;" width="16" height="16" viewBox="0 0 16 16"><path d="M4.4 0.8L9.2 9" stroke="#5a5a5a" stroke-width="1.6" fill="none" /><path d="M7.6 8.8L10.6 7.4C11.6 10.4 13.4 12.8 15.8 14.4L11.8 16.4C9.4 14.4 8 11.8 7.6 8.8Z" fill="#f7b04a" stroke="#ee9a28" stroke-width="0.7"/></svg>
<svg class="r" style="left:1028px;top:728px;" width="18" height="18" viewBox="0 0 16 16"><path d="M3 4.6H13L12.2 14.6Q12.1 15.4 11.3 15.4H4.7Q3.9 15.4 3.8 14.6Z" fill="#2f86cd" /><path d="M2.2 2.6H13.8V3.8H2.2Z" fill="#2f86cd" /><path d="M6 1.2H10V2.6H6Z" fill="#2f86cd" /><path d="M5.8 6.2V13.4M8 6.2V13.4M10.2 6.2V13.4" stroke="#fff" stroke-width="0.9" fill="none" /></svg>
<svg class="r" style="left:1061px;top:729px;" width="16" height="16" viewBox="0 0 16 16"><path d="M1.5 2V14.5H14" stroke="#777" stroke-width="1" fill="none" /><path d="M1.5 0.3L0.2 2.6H2.8Z" fill="#777" /><path d="M15.8 14.5L13.4 13.2V15.8Z" fill="#777" /><rect x="3.6" y="2.6" width="11" height="9.6" fill="#fff" stroke="#b2449c" stroke-width="1.1" /><rect x="3.6" y="2.6" width="11" height="2.6" fill="#e6b6dc" /><path d="M3.6 5.2H14.6M3.6 8.6H14.6M9.2 2.6V12.2" stroke="#b2449c" stroke-width="1" fill="none" /></svg>
<svg class="r" style="left:1084px;top:729px;" width="16" height="16" viewBox="0 0 16 16"><rect x="0.9" y="0.3" width="15" height="14.6" fill="#b455a5" /></svg>
<svg class="r" style="left:1107px;top:729px;" width="16" height="16" viewBox="0 0 16 16"><path d="M8.5 1C13 0.5 16 4 15.5 8.5C15 13 12.5 16 10.5 14C8.5 12 9 10.5 7 10C4 9.3 1 8.5 1.2 5.5C1.5 2.5 5 1.3 8.5 1Z" stroke="#b2449c" stroke-width="1" fill="none" /><path d="M8.8 3C11.8 2.8 13.8 5 13.6 8.4C13.3 11.5 11.8 13 10.6 12C9.4 11 10 9 8 8.4C5.5 7.6 3.2 7.4 3.4 5.6C3.6 3.8 6.2 3.2 8.8 3Z" stroke="#b2449c" stroke-width="0.9" fill="none" /><path d="M10 5.2C11.6 5.5 12 7 11.8 8.8C11.6 10.4 11 10.8 10.6 10C10.2 9 10.6 7.4 9.2 6.6C8 6 8.6 5 10 5.2Z" stroke="#b2449c" stroke-width="0.9" fill="none" /></svg>
<svg class="r" style="left:1130px;top:729px;" width="16" height="16" viewBox="0 0 16 16"><rect x="1.1" y="0.4" width="14.6" height="14.4" fill="#fff" stroke="#999" stroke-width="1" /><rect x="3" y="10.5" width="1" height="1" fill="#b2449c" /><rect x="4.5" y="8.5" width="1" height="1" fill="#b2449c" /><rect x="5.5" y="11" width="1" height="1" fill="#b2449c" /><rect x="6" y="7" width="1" height="1" fill="#b2449c" /><rect x="7" y="9" width="1" height="1" fill="#b2449c" /><rect x="7.5" y="5.5" width="1" height="1" fill="#b2449c" /><rect x="8.5" y="7.5" width="1" height="1" fill="#b2449c" /><rect x="9" y="4.5" width="1" height="1" fill="#b2449c" /><rect x="10" y="6" width="1" height="1" fill="#b2449c" /><rect x="10.5" y="3.5" width="1" height="1" fill="#b2449c" /><rect x="11.5" y="5" width="1" height="1" fill="#b2449c" /><rect x="12.5" y="3" width="1" height="1" fill="#b2449c" /><rect x="9" y="9.5" width="1" height="1" fill="#b2449c" /><rect x="11" y="8" width="1" height="1" fill="#b2449c" /></svg>
<svg class="r" style="left:1153px;top:729px;" width="16" height="16" viewBox="0 0 16 16"><rect x="0.8" y="1" width="7.6" height="5.6" fill="#fff" stroke="#b2449c" stroke-width="1" /><path d="M0.8 3.8H8.4M4.6 1V6.6" stroke="#b2449c" stroke-width="1" fill="none" /><path d="M9.5 2H13M9.5 5.2H14.5M0.8 10.5H14.5M4 14H14.5" stroke="#b2449c" stroke-width="1.1" fill="none" /><path d="M12.5 0.4L15 2L12.5 3.6Z" fill="#b2449c" /><path d="M14 3.6L16.5 5.2L14 6.8Z" fill="#b2449c" /><path d="M14 8.9L16.5 10.5L14 12.1Z" fill="#b2449c" /><path d="M14 12.4L16.5 14L14 15.6Z" fill="#b2449c" /></svg>
<svg class="r" style="left:1184px;top:729px;" width="16" height="16" viewBox="0 0 16 16"><rect x="0.6" y="0.8" width="10" height="10.6" fill="#fff" stroke="#888" stroke-width="1" /><path d="M2.4 3H6M2.4 5H8.5M2.4 7H5" stroke="#888" stroke-width="0.9" fill="none" /><rect x="5.6" y="4.6" width="10" height="11" fill="#fff" stroke="#2f86cd" stroke-width="1.2" /><rect x="7.4" y="6.4" width="4.4" height="1.5" fill="#2f86cd" /><rect x="7.4" y="9.6" width="6.4" height="4.2" fill="none" stroke="#2f86cd" stroke-width="1" /><path d="M7.4 11.7H13.8M10.6 9.6V13.8" stroke="#2f86cd" stroke-width="0.9" fill="none" /></svg>
<svg class="r" style="left:1207px;top:729px;" width="16" height="16" viewBox="0 0 16 16"><path d="M10.6 4V2.5H0.8V13.5H10.6V12" stroke="#888" stroke-width="1.1" fill="none" /><path d="M0.8 4.6H10.6" stroke="#888" stroke-width="1" fill="none" /><path d="M6 8.2H13" stroke="#2f86cd" stroke-width="2" fill="none" /><path d="M11.8 4.8L16.4 8.2L11.8 11.6Z" fill="#2f86cd" /></svg>
<svg class="r" style="left:1230px;top:729px;" width="16" height="16" viewBox="0 0 16 16"><rect x="0.6" y="1.8" width="11.4" height="9.4" fill="#fff" stroke="#888" stroke-width="1" /><rect x="2.4" y="3.4" width="4" height="1.2" fill="#888" /><rect x="4.2" y="5.6" width="11.6" height="9.6" fill="#fff" stroke="#2f86cd" stroke-width="1.2" /><rect x="6" y="7.4" width="4.6" height="1.4" fill="#2f86cd" /><rect x="6" y="10.4" width="8" height="3" fill="none" stroke="#2f86cd" stroke-width="1" /><path d="M10 10.4V13.4" stroke="#2f86cd" stroke-width="0.9" fill="none" /></svg>
<svg class="r" style="left:1261px;top:729px;" width="16" height="16" viewBox="0 0 16 16"><rect x="2.4" y="0.4" width="11" height="6.8" fill="#fff" stroke="#777" stroke-width="1.1" rx="1" /><rect x="2.4" y="7.2" width="11" height="7.4" fill="#fff" stroke="#777" stroke-width="1.1" rx="1" /><path d="M5 3.8H10.8M5 11H10.8" stroke="#2f86cd" stroke-width="1.1" fill="none" /></svg>
<svg class="r" style="left:1284px;top:729px;" width="16" height="16" viewBox="0 0 16 16"><rect x="1.5" y="2" width="12.4" height="11.6" fill="#fff" stroke="#b455a5" stroke-width="1.2" /><path d="M1.5 5.9H13.9M1.5 9.8H13.9M5.6 2V13.6M9.8 2V13.6" stroke="#b455a5" stroke-width="1.2" fill="none" /></svg>
<svg class="r" style="left:1301px;top:729px;" width="16" height="16" viewBox="0 0 16 16"><path d="M4.5 6.2H11.5L8 10.4Z" fill="#111" /></svg>
<div class="r" style="left:822px;top:729px;width:1px;height:16px;background:#c4c4c4;"></div>
<div class="r" style="left:945px;top:729px;width:1px;height:16px;background:#c4c4c4;"></div>
<div class="r" style="left:999px;top:729px;width:1px;height:16px;background:#c4c4c4;"></div>
<div class="r" style="left:1053px;top:729px;width:1px;height:16px;background:#c4c4c4;"></div>
<div class="r" style="left:1176px;top:729px;width:1px;height:16px;background:#c4c4c4;"></div>
<div class="r" style="left:1253px;top:729px;width:1px;height:16px;background:#c4c4c4;"></div>
<div class="r" style="left:796px;top:750px;width:1113px;height:291px;background:#fff;border:1px solid #e2e2e5;"></div>
<div class="r" style="left:797px;top:751px;width:1111px;height:26px;background:#f0f0f0;"></div>
<div class="r" style="left:896px;top:751px;width:1px;height:98px;background:#b5b5b5;"></div>
<div class="r" style="left:957px;top:751px;width:1px;height:98px;background:#b5b5b5;"></div>
<div class="r" style="left:1907px;top:751px;width:1px;height:26px;background:#b5b5b5;"></div>
<div class="r" style="left:797px;top:794px;width:1111px;height:1px;background:#b5b5b5;"></div>
<div class="r" style="left:797px;top:812px;width:1111px;height:1px;background:#b5b5b5;"></div>
<div class="r" style="left:797px;top:830px;width:1111px;height:1px;background:#b5b5b5;"></div>
<div class="r" style="left:797px;top:848px;width:1111px;height:1px;background:#b5b5b5;"></div>
<div class="t" style="left:802px;top:759.0px;font-size:12px;line-height:16px;color:#000;letter-spacing:0.100px;">Iteration number</div>
<div class="t" style="left:902px;top:759.0px;font-size:12px;line-height:16px;color:#000;letter-spacing:-0.004px;">Objective</div>
<div class="t" style="left:798px;top:777.5px;font-size:12px;line-height:16px;color:#000;letter-spacing:-0.619px;">1.0000</div>
<div class="t" style="left:898px;top:777.5px;font-size:12px;line-height:16px;color:#000;letter-spacing:-0.619px;">2.2059</div>
<div class="t" style="left:798px;top:795.5px;font-size:12px;line-height:16px;color:#000;letter-spacing:-0.619px;">2.0000</div>
<div class="t" style="left:898px;top:795.5px;font-size:12px;line-height:16px;color:#000;letter-spacing:-0.619px;">2.1295</div>
<div class="t" style="left:798px;top:813.5px;font-size:12px;line-height:16px;color:#000;letter-spacing:-0.619px;">3.0000</div>
<div class="t" style="left:898px;top:813.5px;font-size:12px;line-height:16px;color:#000;letter-spacing:-0.619px;">2.1312</div>
<div class="t" style="left:798px;top:831.5px;font-size:12px;line-height:16px;color:#000;letter-spacing:-0.619px;">4.0000</div>
<div class="t" style="left:898px;top:831.5px;font-size:12px;line-height:16px;color:#000;letter-spacing:-0.619px;">2.1313</div>
</body></html>
